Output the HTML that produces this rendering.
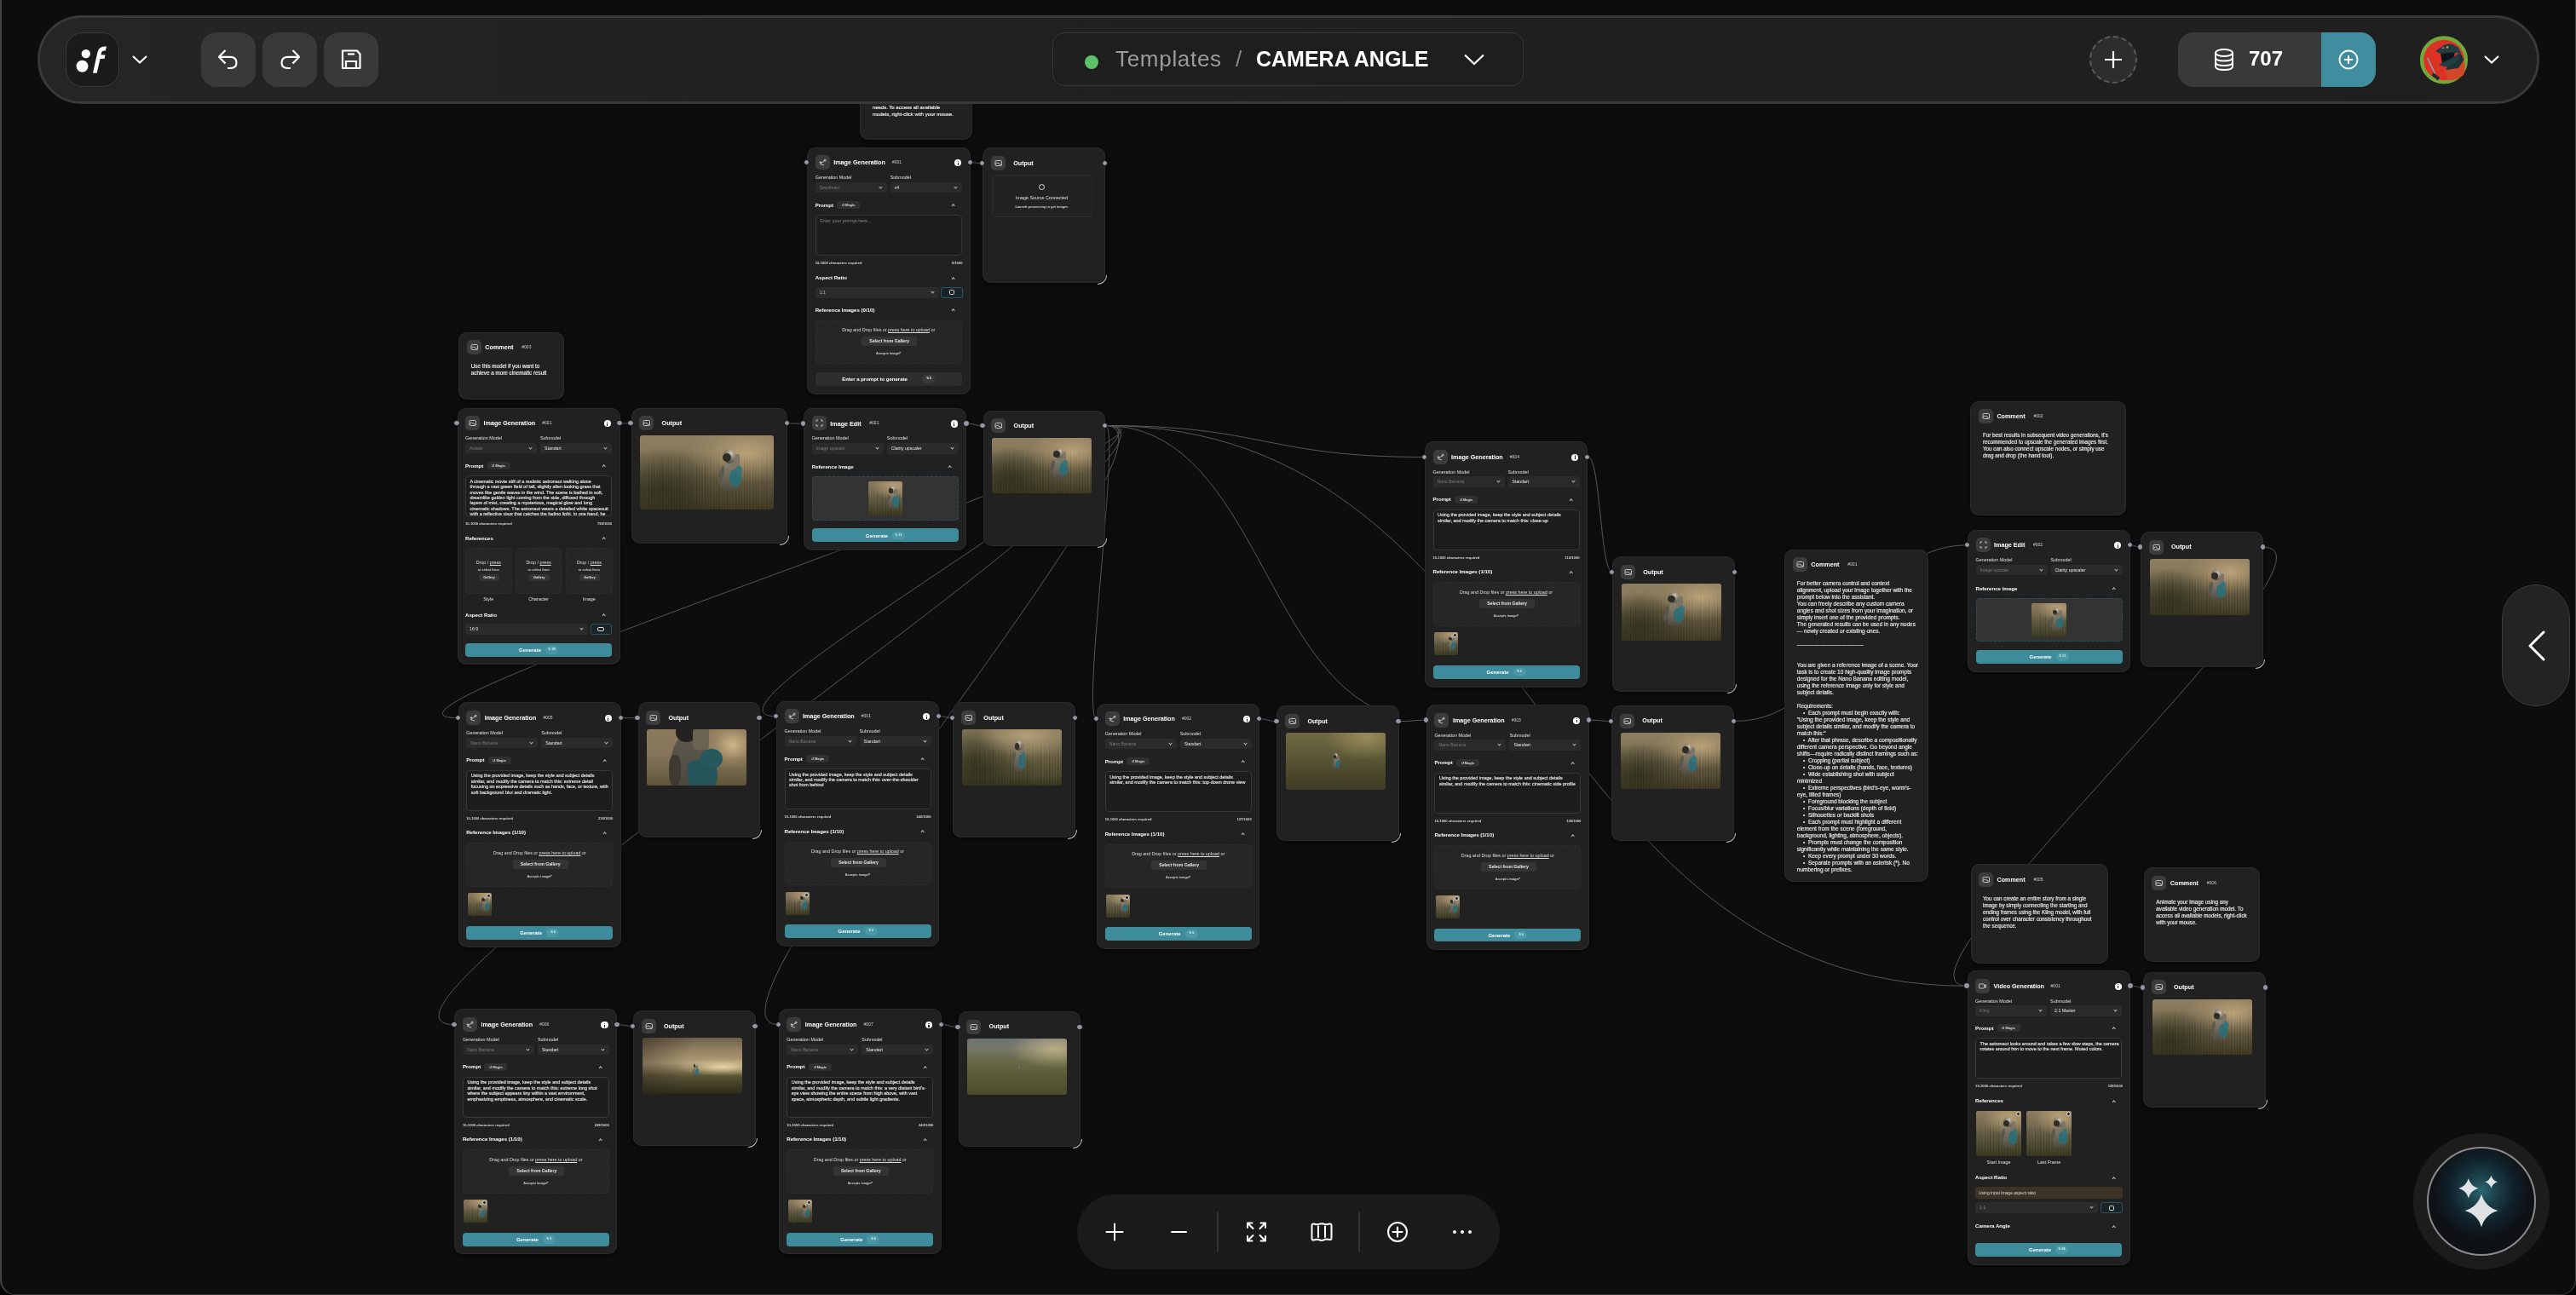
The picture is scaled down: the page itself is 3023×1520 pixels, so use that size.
<!DOCTYPE html>
<html><head><meta charset="utf-8"><style>
*{box-sizing:border-box;margin:0;padding:0}
html,body{width:3023px;height:1520px;overflow:hidden;background:#000}
body{font-family:"Liberation Sans",sans-serif;color:#fff;position:relative;-webkit-font-smoothing:antialiased}
.abs{position:absolute}
#win{position:absolute;left:0;top:0;width:3023px;height:1520px;will-change:transform;background:#0d0d0d;border-bottom-left-radius:18px;border-bottom-right-radius:18px;overflow:hidden}
#topbar{position:absolute;left:44px;top:18px;width:2936px;height:104px;border-radius:52px;border:3px solid #393939;background:linear-gradient(90deg,#252525 0%,#212121 30%,#202020 70%,#1f1f1f 100%)}
.tbtn{position:absolute;top:38px;width:64px;height:64px;border-radius:18px;background:#393939}
.logo{position:absolute;left:77px;top:38px;width:63px;height:64px;border-radius:20px;background:#1b1b1b;border:1px solid #3a3a3a}
.crumb{position:absolute;left:1235px;top:38px;width:553px;height:63px;border-radius:14px;border:1.5px solid #363636;background:#1e1e1e}
.credits{position:absolute;left:2556px;top:38px;width:232px;height:64px;border-radius:18px;background:#393939;overflow:hidden}
.credits .teal{position:absolute;right:0;top:0;width:64px;height:64px;background:#3f8d9e}
.dashc{position:absolute;left:2452px;top:42px;width:56px;height:56px;border-radius:50%;border:2px dashed #5a5a5a;background:#2d2d2d}
.avatar{position:absolute;left:2840px;top:42px;width:56px;height:56px;border-radius:50%;background:#6ea43a;overflow:hidden}
#zoombar{position:absolute;left:1264px;top:1402px;width:496px;height:88px;border-radius:44px;background:#1b1b1b}
#rtab{position:absolute;left:2936px;top:686px;width:80px;height:143px;border-radius:40px;background:#232323;border:1.5px solid #3b3b3b}
#spark{position:absolute;left:2832px;top:1330px;width:160px;height:160px;border-radius:50%;background:#1c1c1c}
#spark .in{position:absolute;left:16px;top:16px;width:128px;height:128px;border-radius:50%;border:2px solid #8a8a8a;background:radial-gradient(circle at 50% 40%,#2c6672 0%,#1c414a 18%,#10202a 40%,#0e1115 60%)}

.nd{position:absolute;background:#212121;border-radius:10px;box-shadow:inset 0 0 0 1px #2a2a2a,0 2px 6px rgba(0,0,0,.5)}
.ic{position:absolute;left:9.5px;top:9.5px;width:17px;height:17px;border-radius:5px;background:#3c3c3c}
.ic svg{position:absolute;left:0;top:0}
.tt{position:absolute;left:31px;top:13.8px;font-size:7.2px;line-height:9px;font-weight:bold;color:#fff;white-space:nowrap}
.id{position:absolute;top:14.5px;font-size:5px;line-height:7px;color:#d0d0d0;white-space:nowrap}
.info{position:absolute;width:8.2px;height:8.2px;border-radius:50%;background:#fff}
.info:after{content:"";position:absolute;left:3.55px;top:3.6px;width:1.1px;height:3px;background:#222}
.info:before{content:"";position:absolute;left:3.55px;top:1.7px;width:1.1px;height:1.1px;background:#222;border-radius:50%}
.hd{position:absolute;width:5.4px;height:5.4px;border-radius:50%;background:#9896a4;border:1.5px solid #0a0a0a;box-sizing:content-box}
.lb{position:absolute;font-size:5.4px;line-height:7px;color:#e0e0e0;white-space:nowrap}
.sel{position:absolute;height:12.5px;border-radius:3px;background:#2b2b2b}
.sel span{position:absolute;left:5px;top:3px;font-size:5.2px;line-height:6.5px;white-space:nowrap}
.sel i{position:absolute;right:6px;top:4px;width:3px;height:3px;border-right:0.8px solid #bbb;border-bottom:0.8px solid #bbb;transform:rotate(45deg)}
.sh{position:absolute;font-size:6.1px;line-height:8px;font-weight:bold;color:#fff;white-space:nowrap}
.chip{position:absolute;height:9px;border-radius:3px;background:#303030;font-size:4px;line-height:9px;color:#ddd;font-weight:bold;text-align:center}
.car{position:absolute;width:3.4px;height:3.4px;border-left:0.9px solid #bbb;border-top:0.9px solid #bbb;transform:rotate(45deg)}
.ta{position:absolute;border:1px solid #363636;border-radius:4px;background:#1d1d1d;padding:2.6px 4.5px;font-size:5.45px;line-height:6.4px;color:#e4e4e4;overflow:hidden;white-space:pre;-webkit-text-stroke:0.15px currentColor}
.sm{position:absolute;font-size:4.13px;line-height:5px;color:#d8d8d8;white-space:nowrap;font-weight:bold}
.dz{position:absolute;border:1px dashed #2d2d2d;border-radius:4px;background:#262626}
.dz .t1{position:absolute;left:0;right:0;text-align:center;font-size:5.36px;line-height:6px;color:#dedede;white-space:nowrap}
.dz .t1 u{text-decoration:underline}
.dz .gb{position:absolute;height:11px;border-radius:3px;background:#343434;font-size:5.14px;line-height:11px;color:#e8e8e8;text-align:center;font-weight:bold}
.dz .t2{position:absolute;left:0;right:0;text-align:center;font-size:3.8px;line-height:5px;color:#cfcfcf;font-weight:bold}
.gen{position:absolute;height:15.8px;border-radius:4px;background:#3e8c9b;text-align:center}
.gen b{position:absolute;top:5.2px;font-size:6px;line-height:7px;color:#fff}
.gen s{position:absolute;top:3.2px;height:9.4px;border-radius:5px;background:#4b98a6;text-decoration:none;font-size:3.8px;line-height:9.4px;color:#d8eef2;text-align:center;font-weight:bold}
.gray{background:#2e2e2e}
.rbtn{position:absolute;height:13px;border-radius:3px;border:1px solid #2a5663;background:#1a2427}
.rbtn i{position:absolute;left:50%;top:50%;width:6px;height:6px;margin:-3px 0 0 -3px;border:0.9px solid #ddd;border-radius:1.5px}
.rbtn.wide i{width:8px;height:4.5px;margin:-2.25px 0 0 -4px;border-radius:2px}
.th{position:absolute;border-radius:2px;overflow:hidden}
.thx{position:absolute;width:5px;height:5px;border-radius:50%;background:#1a1a1a;border:0.6px solid #ddd}
.ot{position:absolute;top:13.3px;font-size:7.2px;line-height:9px;font-weight:bold;color:#fff}
.img{position:absolute;border-radius:3px;overflow:hidden}
.rs{position:absolute;width:11px;height:11px;border-right:1.4px solid #b8b8b8;border-bottom:1.4px solid #b8b8b8;border-bottom-right-radius:11px}
.ct{position:absolute;font-size:6.3px;line-height:8px;color:#e6e6e6;white-space:pre;-webkit-text-stroke:0.18px #e6e6e6}
</style></head>
<body><div id="win">
<svg class="abs" style="left:0;top:0" width="3023" height="1520"><g stroke="#8a8a8a" stroke-width="1" fill="none" opacity="0.6"><path d="M1297.0 499.5 C1484.5 499.5 1484.5 536.5 1672.0 536.5"/><path d="M1297.0 499.5 C1802.8 499.5 1802.8 1157.3 2308.6 1157.3"/><path d="M1297.0 499.5 C1316.6 499.5 1267.6 843.9 1287.2 843.9"/><path d="M1297.0 499.5 C1419.8 499.5 788.2 840.8 911.0 840.8"/><path d="M1297.0 499.5 C1469.2 499.5 365.5 842.7 537.7 842.7"/><path d="M1297.0 499.5 C1469.7 499.5 360.7 1202.7 533.4 1202.7"/><path d="M1297.0 499.5 C1419.3 499.5 791.5 1202.7 913.8 1202.7"/><path d="M1297.0 499.5 C1462.9 499.5 1482.8 767.3 1613.6 831.6"/><path d="M727.6 497.0 C734.1 497.0 734.1 497.0 740.6 497.0"/><path d="M923.8 497.0 C933.5 497.0 933.5 497.2 943.3 497.2"/><path d="M1134.5 497.2 C1144.0 497.2 1144.0 499.8 1153.6 499.8"/><path d="M1139.0 190.8 C1146.1 190.8 1146.1 191.7 1153.2 191.7"/><path d="M728.8 842.7 C738.6 842.7 738.6 842.7 748.5 842.7"/><path d="M1102.0 840.8 C1110.2 840.8 1110.2 842.7 1118.3 842.7"/><path d="M1478.4 843.9 C1488.4 843.9 1488.4 846.7 1498.4 846.7"/><path d="M1863.7 536.5 C1878.0 536.5 1878.0 671.7 1892.2 671.7"/><path d="M1865.6 845.3 C1878.4 845.3 1878.4 846.5 1891.3 846.5"/><path d="M2035.1 846.5 C2172.1 846.5 2172.1 639.8 2309.0 639.8"/><path d="M2500.2 639.8 C2506.1 639.8 2506.1 642.3 2512.0 642.3"/><path d="M2655.9 642.3 C2772.4 642.3 2192.1 1157.3 2308.6 1157.3"/><path d="M1641.6 846.7 C1657.8 846.7 1657.8 845.3 1674.0 845.3"/><path d="M724.6 1202.7 C733.8 1202.7 733.8 1204.6 743.0 1204.6"/><path d="M1105.3 1202.7 C1114.9 1202.7 1114.9 1205.5 1124.6 1205.5"/><path d="M2500.5 1157.3 C2507.8 1157.3 2507.8 1159.1 2515.0 1159.1"/></g></svg><div class="nd" style="left:1009px;top:60px;width:132px;height:103.5px;"><div class="ct" style="left:14.8px;top:62px;font-size:6px">needs. To access all available
models, right-click with your mouse.</div></div><div class="nd" style="left:947.2px;top:172.5px;width:191.8px;height:290px;"><div class="ic"><svg width="17" height="17" viewBox="0 0 17 17"><g stroke="#cfcfcf" stroke-width="0.9" fill="none"><path d="M5.5 10.5 L11 6.5 M5.5 10.5 L10 12"/><circle cx="11.2" cy="6.2" r="1"/></g><path d="M6 6.5 l0.5 1.5 1.5 .5 -1.5 .5 -.5 1.5 -.5-1.5 -1.5-.5 1.5-.5z" fill="#cfcfcf"/></svg></div><div class="tt" style="left:31px">Image Generation</div><div class="id" style="left:99.8px">#001</div><div class="info" style="left:172.9px;top:14.6px"></div><div class="lb" style="left:9.5px;top:32.5px">Generation Model</div><div class="lb" style="left:97.5px;top:32.5px">Submodel</div><div class="sel" style="left:9.5px;top:41.3px;width:84px"><span style="color:#7a7a7a">Seedream</span><i></i></div><div class="sel" style="left:97.5px;top:41.3px;width:84px"><span style="color:#e8e8e8">v4</span><i></i></div><div class="sh" style="left:9.5px;top:64.0px">Prompt</div><div class="car" style="left:170px;top:67.5px"></div><div class="chip" style="left:35px;top:63.5px;width:27px">&#8634; Magic</div><div class="ta" style="left:9.5px;top:79.5px;width:172px;height:48px;color:#6a6a6a">Enter your prompt here...</div><div class="sm" style="left:9.5px;top:133.5px">10-1000 characters required</div><div class="sm" style="right:9.5px;top:133.5px">0/1000</div><div class="sh" style="left:9.5px;top:149.5px">Aspect Ratio</div><div class="car" style="left:170px;top:153.0px"></div><div class="sel" style="left:9.5px;top:164.5px;width:145px"><span style="color:#bbb">1:1</span><i></i></div><div class="rbtn" style="left:156.6px;top:164px;width:25.8px"><i></i></div><div class="sh" style="left:9.5px;top:187.3px">Reference Images (0/10)</div><div class="car" style="left:170px;top:190.8px"></div><div class="dz" style="left:9.5px;top:203px;width:172px;height:51.5px"><div class="t1" style="top:7.8px">Drag and Drop files or <u>press here to upload</u> or</div><div class="gb" style="left:53.5px;top:18.8px;width:65px">Select from Gallery</div><div class="t2" style="top:36.5px">Accepts image/*</div></div><div class="gen gray" style="left:9.5px;top:264.5px;width:172px"><b style="left:31.5px">Enter a prompt to generate</b><s style="left:125.5px;width:15px;background:#3a3a3a">&#8623; 6</s></div></div><div class="hd" style="left:943.0px;top:186.9px"></div><div class="hd" style="left:1134.8px;top:186.9px"></div><div class="nd" style="left:1153.2px;top:173.4px;width:143.8px;height:159px;"><div class="ic"><svg width="17" height="17" viewBox="0 0 17 17"><g stroke="#cfcfcf" stroke-width="0.9" fill="none"><rect x="5" y="5.5" width="7.5" height="6" rx="1.2"/><path d="M5.2 9.5 L7.5 8 L12.3 10.8"/></g></svg></div><div class="ot" style="left:36px">Output</div><div class="img" style="left:10.5px;top:32px;width:117.3px;height:0px"></div></div><div class="hd" style="left:1149.0px;top:187.8px"></div><div class="hd" style="left:1292.8px;top:187.8px"></div><div class="rs" style="left:1288.0px;top:323.4px"></div><div class="abs" style="left:1163.5px;top:204.5px;width:118px;height:50.5px;border:1px solid #2c2c2c;border-radius:4px;background:#222"></div><div class="abs" style="left:1163.5px;top:229px;width:118px;text-align:center;font-size:5.4px;line-height:7px;color:#e0e0e0">Image Source Connected</div><div class="abs" style="left:1163.5px;top:240px;width:118px;text-align:center;font-size:3.9px;line-height:5px;color:#d0d0d0;font-weight:bold">Launch processing to get images</div><div class="abs" style="left:1218.5px;top:216px;width:7px;height:7px;border-radius:50%;border:0.9px solid #ddd"></div><div class="nd" style="left:538.3px;top:389.5px;width:123.3px;height:79.5px;"><div class="ic"><svg width="17" height="17" viewBox="0 0 17 17"><g stroke="#cfcfcf" stroke-width="0.9" fill="none"><rect x="5" y="5.5" width="7.5" height="6" rx="1.2"/><path d="M5.2 9.5 L7.5 8 L12.3 10.8"/></g></svg></div><div class="tt" style="left:31px">Comment</div><div class="id" style="left:74.0px">#003</div><div class="ct" style="left:14.5px;top:36.5px;font-size:6.3px">Use this model if you want to
achieve a more cinematic result</div></div><div class="nd" style="left:536.5px;top:478.7px;width:191.1px;height:301.6px;"><div class="ic"><svg width="17" height="17" viewBox="0 0 17 17"><g stroke="#cfcfcf" stroke-width="0.9" fill="none"><rect x="5" y="5.5" width="7.5" height="6" rx="1.2"/><path d="M5.2 9.5 L7.5 8 L12.3 10.8"/></g></svg></div><div class="tt" style="left:31px">Image Generation</div><div class="id" style="left:99.8px">#001</div><div class="info" style="left:172.2px;top:14.6px"></div><div class="lb" style="left:9.5px;top:32.5px">Generation Model</div><div class="lb" style="left:97.5px;top:32.5px">Submodel</div><div class="sel" style="left:9.5px;top:41.3px;width:84px"><span style="color:#7a7a7a">Artistic</span><i></i></div><div class="sel" style="left:97.5px;top:41.3px;width:84px"><span style="color:#e8e8e8">Standart</span><i></i></div><div class="sh" style="left:9.5px;top:64.0px">Prompt</div><div class="car" style="left:170px;top:67.5px"></div><div class="chip" style="left:35px;top:63.5px;width:27px">&#8634; Magic</div><div class="ta" style="left:9.5px;top:79.5px;width:172px;height:48px;color:#e4e4e4">A cinematic movie still of a realistic astronaut walking alone
through a vast green field of tall, slightly alien-looking grass that
moves like gentle waves in the wind. The scene is bathed in soft,
dreamlike golden light coming from the side, diffused through
layers of mist, creating a mysterious, magical glow and long
cinematic shadows. The astronaut wears a detailed white spacesuit
with a reflective visor that catches the fading light. In one hand, he</div><div class="sm" style="left:9.5px;top:133.5px">10-1000 characters required</div><div class="sm" style="right:9.5px;top:133.5px">799/1000</div><div class="sh" style="left:9.5px;top:149.2px">References</div><div class="car" style="left:170px;top:152.7px"></div><div class="dz" style="left:9.5px;top:164px;width:54.5px;height:54.7px"><div class="t1" style="top:13px">Drop / <u>press</u></div><div class="t2" style="top:23px">or select from</div><div class="gb" style="left:15px;top:30px;width:24px;height:8px;line-height:8px;font-size:4px">Gallery</div></div><div class="lb" style="left:9.5px;width:54.5px;text-align:center;top:221.5px">Style</div><div class="dz" style="left:68.3px;top:164px;width:54.5px;height:54.7px"><div class="t1" style="top:13px">Drop / <u>press</u></div><div class="t2" style="top:23px">or select from</div><div class="gb" style="left:15px;top:30px;width:24px;height:8px;line-height:8px;font-size:4px">Gallery</div></div><div class="lb" style="left:68.3px;width:54.5px;text-align:center;top:221.5px">Character</div><div class="dz" style="left:127.5px;top:164px;width:54.5px;height:54.7px"><div class="t1" style="top:13px">Drop / <u>press</u></div><div class="t2" style="top:23px">or select from</div><div class="gb" style="left:15px;top:30px;width:24px;height:8px;line-height:8px;font-size:4px">Gallery</div></div><div class="lb" style="left:127.5px;width:54.5px;text-align:center;top:221.5px">Image</div><div class="sh" style="left:9.5px;top:239px">Aspect Ratio</div><div class="car" style="left:170px;top:242.5px"></div><div class="sel" style="left:9.5px;top:253.5px;width:143.5px;height:13px"><span style="color:#ddd">16:9</span><i></i></div><div class="rbtn wide" style="left:156px;top:253.5px;width:25.5px"><i></i></div><div class="gen" style="left:9.5px;top:276.5px;width:172px"><b style="left:63.0px">Generate</b><s style="left:94.0px;width:15px;">&#8623; 28</s></div></div><div class="hd" style="left:532.3px;top:493.1px"></div><div class="hd" style="left:723.4px;top:493.1px"></div><div class="nd" style="left:740.6px;top:478.7px;width:183.2px;height:159px;"><div class="ic"><svg width="17" height="17" viewBox="0 0 17 17"><g stroke="#cfcfcf" stroke-width="0.9" fill="none"><rect x="5" y="5.5" width="7.5" height="6" rx="1.2"/><path d="M5.2 9.5 L7.5 8 L12.3 10.8"/></g></svg></div><div class="ot" style="left:36px">Output</div><div class="img" style="left:10.5px;top:32px;width:156.7px;height:87.7px"><div style="position:absolute;left:0;top:0;width:100%;height:100%;overflow:hidden;background:radial-gradient(ellipse 45% 40% at 80% 25%,rgba(205,178,132,.75) 0%,rgba(190,165,120,.25) 60%,rgba(0,0,0,0) 100%),radial-gradient(ellipse 35% 55% at 18% 72%,rgba(48,50,30,.6) 0%,rgba(48,50,30,0) 100%),linear-gradient(180deg,#8e7e61 0%,#88795b 22%,#776a50 42%,#615840 60%,#514933 78%,#3d3722 100%)"><i style="position:absolute;left:0;top:15%;width:100%;height:85%;background:repeating-linear-gradient(90deg,rgba(25,25,10,.12) 0px,rgba(0,0,0,0) 1.3px,rgba(200,185,130,.07) 2.1px,rgba(0,0,0,0) 3.3px),repeating-linear-gradient(90deg,rgba(20,22,10,.09) 0px,rgba(0,0,0,0) 2px,rgba(0,0,0,0) 5.1px);-webkit-mask-image:linear-gradient(180deg,transparent 0%,#000 40%,#000 100%)"></i><i style="position:absolute;left:0;top:0;width:100%;height:100%;background:radial-gradient(ellipse 55% 60% at 20% 75%,rgba(35,38,20,.4) 0%,rgba(35,38,20,0) 100%)"></i><b style="position:absolute;left:58%;top:19%;width:19%;height:58%;opacity:0.9"><i style="position:absolute;left:18%;top:30%;width:62%;height:66%;border-radius:40% 40% 20% 20%;background:linear-gradient(180deg,#858072 0%,#6f6a5d 50%,#4f4b42 100%)"></i><i style="position:absolute;left:6%;top:38%;width:18%;height:44%;border-radius:40%;background:#5a564c;transform:rotate(12deg)"></i><i style="position:absolute;left:58%;top:12%;width:30%;height:38%;border-radius:25%;background:#7a7466"></i><i style="position:absolute;left:22%;top:0%;width:50%;height:32%;border-radius:50%;background:radial-gradient(circle at 62% 30%,#d6cfbe 0%,#8f897b 35%,#4a473f 80%)"></i><i style="position:absolute;left:20%;top:9%;width:34%;height:20%;border-radius:50%;background:#24231f"></i><i style="position:absolute;left:48%;top:46%;width:46%;height:40%;border-radius:45% 50% 40% 45%;background:#2b6f79"></i><i style="position:absolute;left:70%;top:38%;width:26%;height:20%;border-radius:50%;background:#2e7480"></i></b></div></div></div><div class="hd" style="left:736.4px;top:493.1px"></div><div class="hd" style="left:919.6px;top:493.1px"></div><div class="rs" style="left:914.8px;top:628.7px"></div><div class="nd" style="left:943.3px;top:478.9px;width:191.2px;height:167px;"><div class="ic"><svg width="17" height="17" viewBox="0 0 17 17"><g stroke="#cfcfcf" stroke-width="0.9" fill="none"><path d="M5 7 V5 H7 M10 5 H12 V7 M12 10 V12 H10 M7 12 H5 V10"/></g></svg></div><div class="tt" style="left:31px">Image Edit</div><div class="id" style="left:77.0px">#001</div><div class="info" style="left:172.3px;top:14.6px"></div><div class="lb" style="left:9.5px;top:32.5px">Generation Model</div><div class="lb" style="left:97.5px;top:32.5px">Submodel</div><div class="sel" style="left:9.5px;top:41.3px;width:84px"><span style="color:#7a7a7a">Image upscale</span><i></i></div><div class="sel" style="left:97.5px;top:41.3px;width:84px"><span style="color:#e8e8e8">Clarity upscaler</span><i></i></div><div class="sh" style="left:9.5px;top:65px">Reference Image</div><div class="car" style="left:170px;top:68.5px"></div><div class="dz" style="left:9.7px;top:80.3px;width:172px;height:51.5px;background:#333;border-color:#2c4f57"></div><div class="th" style="left:75.3px;top:86px;width:40.6px;height:40px"><div style="position:absolute;left:0;top:0;width:100%;height:100%;overflow:hidden;background:radial-gradient(ellipse 60% 40% at 75% 15%,rgba(205,178,132,.7) 0%,rgba(0,0,0,0) 100%),linear-gradient(180deg,#8a7a5e 0%,#7a6d53 30%,#5e5840 55%,#4a4730 80%,#38361f 100%)"><i style="position:absolute;left:0;top:15%;width:100%;height:85%;background:repeating-linear-gradient(90deg,rgba(25,25,10,.12) 0px,rgba(0,0,0,0) 1.3px,rgba(200,185,130,.07) 2.1px,rgba(0,0,0,0) 3.3px),repeating-linear-gradient(90deg,rgba(20,22,10,.09) 0px,rgba(0,0,0,0) 2px,rgba(0,0,0,0) 5.1px);-webkit-mask-image:linear-gradient(180deg,transparent 0%,#000 40%,#000 100%)"></i><b style="position:absolute;left:52%;top:14%;width:40%;height:70%;opacity:0.9"><i style="position:absolute;left:18%;top:30%;width:62%;height:66%;border-radius:40% 40% 20% 20%;background:linear-gradient(180deg,#858072 0%,#6f6a5d 50%,#4f4b42 100%)"></i><i style="position:absolute;left:6%;top:38%;width:18%;height:44%;border-radius:40%;background:#5a564c;transform:rotate(12deg)"></i><i style="position:absolute;left:58%;top:12%;width:30%;height:38%;border-radius:25%;background:#7a7466"></i><i style="position:absolute;left:22%;top:0%;width:50%;height:32%;border-radius:50%;background:radial-gradient(circle at 62% 30%,#d6cfbe 0%,#8f897b 35%,#4a473f 80%)"></i><i style="position:absolute;left:20%;top:9%;width:34%;height:20%;border-radius:50%;background:#24231f"></i><i style="position:absolute;left:48%;top:46%;width:46%;height:40%;border-radius:45% 50% 40% 45%;background:#2b6f79"></i><i style="position:absolute;left:70%;top:38%;width:26%;height:20%;border-radius:50%;background:#2e7480"></i></b></div></div><div class="gen" style="left:9.5px;top:141.5px;width:172px"><b style="left:63.0px">Generate</b><s style="left:94.0px;width:15px;">&#8623; 13</s></div></div><div class="hd" style="left:939.1px;top:493.3px"></div><div class="hd" style="left:1130.3px;top:493.3px"></div><div class="nd" style="left:1153.6px;top:481.5px;width:143.4px;height:159px;"><div class="ic"><svg width="17" height="17" viewBox="0 0 17 17"><g stroke="#cfcfcf" stroke-width="0.9" fill="none"><rect x="5" y="5.5" width="7.5" height="6" rx="1.2"/><path d="M5.2 9.5 L7.5 8 L12.3 10.8"/></g></svg></div><div class="ot" style="left:36px">Output</div><div class="img" style="left:10.5px;top:32px;width:116.9px;height:65px"><div style="position:absolute;left:0;top:0;width:100%;height:100%;overflow:hidden;background:radial-gradient(ellipse 45% 40% at 80% 25%,rgba(205,178,132,.75) 0%,rgba(190,165,120,.25) 60%,rgba(0,0,0,0) 100%),radial-gradient(ellipse 35% 55% at 18% 72%,rgba(48,50,30,.6) 0%,rgba(48,50,30,0) 100%),linear-gradient(180deg,#8e7e61 0%,#88795b 22%,#776a50 42%,#615840 60%,#514933 78%,#3d3722 100%)"><i style="position:absolute;left:0;top:15%;width:100%;height:85%;background:repeating-linear-gradient(90deg,rgba(25,25,10,.12) 0px,rgba(0,0,0,0) 1.3px,rgba(200,185,130,.07) 2.1px,rgba(0,0,0,0) 3.3px),repeating-linear-gradient(90deg,rgba(20,22,10,.09) 0px,rgba(0,0,0,0) 2px,rgba(0,0,0,0) 5.1px);-webkit-mask-image:linear-gradient(180deg,transparent 0%,#000 40%,#000 100%)"></i><i style="position:absolute;left:0;top:0;width:100%;height:100%;background:radial-gradient(ellipse 55% 60% at 20% 75%,rgba(35,38,20,.4) 0%,rgba(35,38,20,0) 100%)"></i><b style="position:absolute;left:58%;top:19%;width:19%;height:58%;opacity:0.9"><i style="position:absolute;left:18%;top:30%;width:62%;height:66%;border-radius:40% 40% 20% 20%;background:linear-gradient(180deg,#858072 0%,#6f6a5d 50%,#4f4b42 100%)"></i><i style="position:absolute;left:6%;top:38%;width:18%;height:44%;border-radius:40%;background:#5a564c;transform:rotate(12deg)"></i><i style="position:absolute;left:58%;top:12%;width:30%;height:38%;border-radius:25%;background:#7a7466"></i><i style="position:absolute;left:22%;top:0%;width:50%;height:32%;border-radius:50%;background:radial-gradient(circle at 62% 30%,#d6cfbe 0%,#8f897b 35%,#4a473f 80%)"></i><i style="position:absolute;left:20%;top:9%;width:34%;height:20%;border-radius:50%;background:#24231f"></i><i style="position:absolute;left:48%;top:46%;width:46%;height:40%;border-radius:45% 50% 40% 45%;background:#2b6f79"></i><i style="position:absolute;left:70%;top:38%;width:26%;height:20%;border-radius:50%;background:#2e7480"></i></b></div></div></div><div class="hd" style="left:1149.4px;top:495.9px"></div><div class="hd" style="left:1292.8px;top:495.9px"></div><div class="rs" style="left:1288.0px;top:631.5px"></div><div class="nd" style="left:537.7px;top:824.4px;width:191px;height:288px;"><div class="ic"><svg width="17" height="17" viewBox="0 0 17 17"><g stroke="#cfcfcf" stroke-width="0.9" fill="none"><path d="M5.5 10.5 L11 6.5 M5.5 10.5 L10 12"/><circle cx="11.2" cy="6.2" r="1"/></g><path d="M6 6.5 l0.5 1.5 1.5 .5 -1.5 .5 -.5 1.5 -.5-1.5 -1.5-.5 1.5-.5z" fill="#cfcfcf"/></svg></div><div class="tt" style="left:31px">Image Generation</div><div class="id" style="left:99.8px">#005</div><div class="info" style="left:172.1px;top:14.6px"></div><div class="lb" style="left:9.5px;top:32.5px">Generation Model</div><div class="lb" style="left:97.5px;top:32.5px">Submodel</div><div class="sel" style="left:9.5px;top:41.3px;width:84px"><span style="color:#7a7a7a">Nano Banana</span><i></i></div><div class="sel" style="left:97.5px;top:41.3px;width:84px"><span style="color:#e8e8e8">Standart</span><i></i></div><div class="sh" style="left:9.5px;top:64.0px">Prompt</div><div class="car" style="left:170px;top:67.5px"></div><div class="chip" style="left:35px;top:63.5px;width:27px">&#8634; Magic</div><div class="ta" style="left:9.5px;top:79.5px;width:172px;height:48px;color:#e4e4e4">Using the provided image, keep the style and subject details
similar, and modify the camera to match this: extreme detail
focusing on expressive details such as hands, face, or texture, with
soft background blur and dramatic light.</div><div class="sm" style="left:9.5px;top:133.5px">10-1000 characters required</div><div class="sm" style="right:9.5px;top:133.5px">218/1000</div><div class="sh" style="left:9.5px;top:149px">Reference Images (1/10)</div><div class="car" style="left:170px;top:152.5px"></div><div class="dz" style="left:9.5px;top:165px;width:172px;height:51.5px"><div class="t1" style="top:7.8px">Drag and Drop files or <u>press here to upload</u> or</div><div class="gb" style="left:53.5px;top:18.8px;width:65px">Select from Gallery</div><div class="t2" style="top:36.5px">Accepts image/*</div></div><div class="th" style="left:11px;top:224px;width:28px;height:27px"><div style="position:absolute;left:0;top:0;width:100%;height:100%;overflow:hidden;background:radial-gradient(ellipse 60% 40% at 75% 15%,rgba(205,178,132,.7) 0%,rgba(0,0,0,0) 100%),linear-gradient(180deg,#8a7a5e 0%,#7a6d53 30%,#5e5840 55%,#4a4730 80%,#38361f 100%)"><i style="position:absolute;left:0;top:15%;width:100%;height:85%;background:repeating-linear-gradient(90deg,rgba(25,25,10,.12) 0px,rgba(0,0,0,0) 1.3px,rgba(200,185,130,.07) 2.1px,rgba(0,0,0,0) 3.3px),repeating-linear-gradient(90deg,rgba(20,22,10,.09) 0px,rgba(0,0,0,0) 2px,rgba(0,0,0,0) 5.1px);-webkit-mask-image:linear-gradient(180deg,transparent 0%,#000 40%,#000 100%)"></i><b style="position:absolute;left:52%;top:14%;width:40%;height:70%;opacity:0.9"><i style="position:absolute;left:18%;top:30%;width:62%;height:66%;border-radius:40% 40% 20% 20%;background:linear-gradient(180deg,#858072 0%,#6f6a5d 50%,#4f4b42 100%)"></i><i style="position:absolute;left:6%;top:38%;width:18%;height:44%;border-radius:40%;background:#5a564c;transform:rotate(12deg)"></i><i style="position:absolute;left:58%;top:12%;width:30%;height:38%;border-radius:25%;background:#7a7466"></i><i style="position:absolute;left:22%;top:0%;width:50%;height:32%;border-radius:50%;background:radial-gradient(circle at 62% 30%,#d6cfbe 0%,#8f897b 35%,#4a473f 80%)"></i><i style="position:absolute;left:20%;top:9%;width:34%;height:20%;border-radius:50%;background:#24231f"></i><i style="position:absolute;left:48%;top:46%;width:46%;height:40%;border-radius:45% 50% 40% 45%;background:#2b6f79"></i><i style="position:absolute;left:70%;top:38%;width:26%;height:20%;border-radius:50%;background:#2e7480"></i></b></div></div><div class="thx" style="left:33px;top:225px"></div><div class="gen" style="left:9.5px;top:262.6px;width:172px"><b style="left:63.0px">Generate</b><s style="left:94.0px;width:15px;">&#8623; 6</s></div></div><div class="hd" style="left:533.5px;top:838.8px"></div><div class="hd" style="left:724.5px;top:838.8px"></div><div class="nd" style="left:748.5px;top:824.4px;width:143.1px;height:159px;"><div class="ic"><svg width="17" height="17" viewBox="0 0 17 17"><g stroke="#cfcfcf" stroke-width="0.9" fill="none"><rect x="5" y="5.5" width="7.5" height="6" rx="1.2"/><path d="M5.2 9.5 L7.5 8 L12.3 10.8"/></g></svg></div><div class="ot" style="left:36px">Output</div><div class="img" style="left:10.5px;top:32px;width:116.6px;height:66px"><div style="position:absolute;left:0;top:0;width:100%;height:100%;overflow:hidden;background:radial-gradient(ellipse 30% 45% at 86% 28%,rgba(214,190,142,.9) 0%,rgba(190,160,115,.3) 60%,rgba(0,0,0,0) 100%),linear-gradient(180deg,#8c7a5d 0%,#86755a 40%,#75684c 70%,#5f5539 100%)"><i style="position:absolute;left:25%;top:8%;width:38%;height:100%;border-radius:45% 45% 0 0;background:linear-gradient(180deg,#5f5a50,#4a463d);"></i><i style="position:absolute;left:29%;top:-12%;width:22%;height:34%;border-radius:50%;background:#24221e;"></i><i style="position:absolute;left:46%;top:-4%;width:17%;height:40%;border-radius:20%;background:#6a6352;"></i><i style="position:absolute;left:22%;top:45%;width:12%;height:55%;border-radius:40%;background:#3e3a32;"></i><i style="position:absolute;left:41%;top:52%;width:30%;height:58%;border-radius:45%;background:#24545a;"></i><i style="position:absolute;left:54%;top:35%;width:22%;height:34%;border-radius:50%;background:#26585e;"></i><i style="position:absolute;left:41%;top:55%;width:12%;height:18%;border-radius:50%;background:#24545a;"></i></div></div></div><div class="hd" style="left:744.3px;top:838.8px"></div><div class="hd" style="left:887.4px;top:838.8px"></div><div class="rs" style="left:882.6px;top:974.4px"></div><div class="nd" style="left:911px;top:822.5px;width:191px;height:288px;"><div class="ic"><svg width="17" height="17" viewBox="0 0 17 17"><g stroke="#cfcfcf" stroke-width="0.9" fill="none"><path d="M5.5 10.5 L11 6.5 M5.5 10.5 L10 12"/><circle cx="11.2" cy="6.2" r="1"/></g><path d="M6 6.5 l0.5 1.5 1.5 .5 -1.5 .5 -.5 1.5 -.5-1.5 -1.5-.5 1.5-.5z" fill="#cfcfcf"/></svg></div><div class="tt" style="left:31px">Image Generation</div><div class="id" style="left:99.8px">#001</div><div class="info" style="left:172.1px;top:14.6px"></div><div class="lb" style="left:9.5px;top:32.5px">Generation Model</div><div class="lb" style="left:97.5px;top:32.5px">Submodel</div><div class="sel" style="left:9.5px;top:41.3px;width:84px"><span style="color:#7a7a7a">Nano Banana</span><i></i></div><div class="sel" style="left:97.5px;top:41.3px;width:84px"><span style="color:#e8e8e8">Standart</span><i></i></div><div class="sh" style="left:9.5px;top:64.0px">Prompt</div><div class="car" style="left:170px;top:67.5px"></div><div class="chip" style="left:35px;top:63.5px;width:27px">&#8634; Magic</div><div class="ta" style="left:9.5px;top:79.5px;width:172px;height:48px;color:#e4e4e4">Using the provided image, keep the style and subject details
similar, and modify the camera to match this: over-the-shoulder
shot from behind</div><div class="sm" style="left:9.5px;top:133.5px">10-1000 characters required</div><div class="sm" style="right:9.5px;top:133.5px">142/1000</div><div class="sh" style="left:9.5px;top:149px">Reference Images (1/10)</div><div class="car" style="left:170px;top:152.5px"></div><div class="dz" style="left:9.5px;top:165px;width:172px;height:51.5px"><div class="t1" style="top:7.8px">Drag and Drop files or <u>press here to upload</u> or</div><div class="gb" style="left:53.5px;top:18.8px;width:65px">Select from Gallery</div><div class="t2" style="top:36.5px">Accepts image/*</div></div><div class="th" style="left:11px;top:224px;width:28px;height:27px"><div style="position:absolute;left:0;top:0;width:100%;height:100%;overflow:hidden;background:radial-gradient(ellipse 60% 40% at 75% 15%,rgba(205,178,132,.7) 0%,rgba(0,0,0,0) 100%),linear-gradient(180deg,#8a7a5e 0%,#7a6d53 30%,#5e5840 55%,#4a4730 80%,#38361f 100%)"><i style="position:absolute;left:0;top:15%;width:100%;height:85%;background:repeating-linear-gradient(90deg,rgba(25,25,10,.12) 0px,rgba(0,0,0,0) 1.3px,rgba(200,185,130,.07) 2.1px,rgba(0,0,0,0) 3.3px),repeating-linear-gradient(90deg,rgba(20,22,10,.09) 0px,rgba(0,0,0,0) 2px,rgba(0,0,0,0) 5.1px);-webkit-mask-image:linear-gradient(180deg,transparent 0%,#000 40%,#000 100%)"></i><b style="position:absolute;left:52%;top:14%;width:40%;height:70%;opacity:0.9"><i style="position:absolute;left:18%;top:30%;width:62%;height:66%;border-radius:40% 40% 20% 20%;background:linear-gradient(180deg,#858072 0%,#6f6a5d 50%,#4f4b42 100%)"></i><i style="position:absolute;left:6%;top:38%;width:18%;height:44%;border-radius:40%;background:#5a564c;transform:rotate(12deg)"></i><i style="position:absolute;left:58%;top:12%;width:30%;height:38%;border-radius:25%;background:#7a7466"></i><i style="position:absolute;left:22%;top:0%;width:50%;height:32%;border-radius:50%;background:radial-gradient(circle at 62% 30%,#d6cfbe 0%,#8f897b 35%,#4a473f 80%)"></i><i style="position:absolute;left:20%;top:9%;width:34%;height:20%;border-radius:50%;background:#24231f"></i><i style="position:absolute;left:48%;top:46%;width:46%;height:40%;border-radius:45% 50% 40% 45%;background:#2b6f79"></i><i style="position:absolute;left:70%;top:38%;width:26%;height:20%;border-radius:50%;background:#2e7480"></i></b></div></div><div class="thx" style="left:33px;top:225px"></div><div class="gen" style="left:9.5px;top:262.6px;width:172px"><b style="left:63.0px">Generate</b><s style="left:94.0px;width:15px;">&#8623; 6</s></div></div><div class="hd" style="left:906.8px;top:836.9px"></div><div class="hd" style="left:1097.8px;top:836.9px"></div><div class="nd" style="left:1118.3px;top:824.4px;width:143.7px;height:159px;"><div class="ic"><svg width="17" height="17" viewBox="0 0 17 17"><g stroke="#cfcfcf" stroke-width="0.9" fill="none"><rect x="5" y="5.5" width="7.5" height="6" rx="1.2"/><path d="M5.2 9.5 L7.5 8 L12.3 10.8"/></g></svg></div><div class="ot" style="left:36px">Output</div><div class="img" style="left:10.5px;top:32px;width:117.2px;height:66px"><div style="position:absolute;left:0;top:0;width:100%;height:100%;overflow:hidden;background:radial-gradient(ellipse 50% 40% at 65% 12%,rgba(200,178,135,.7) 0%,rgba(0,0,0,0) 100%),radial-gradient(ellipse 35% 70% at 12% 60%,rgba(50,52,30,.7) 0%,rgba(50,52,30,0) 100%),linear-gradient(180deg,#857658 0%,#756a4f 35%,#5e583b 60%,#48452d 85%,#36341f 100%)"><i style="position:absolute;left:0;top:15%;width:100%;height:85%;background:repeating-linear-gradient(90deg,rgba(25,25,10,.12) 0px,rgba(0,0,0,0) 1.3px,rgba(200,185,130,.07) 2.1px,rgba(0,0,0,0) 3.3px),repeating-linear-gradient(90deg,rgba(20,22,10,.09) 0px,rgba(0,0,0,0) 2px,rgba(0,0,0,0) 5.1px);-webkit-mask-image:linear-gradient(180deg,transparent 0%,#000 40%,#000 100%)"></i><i style="position:absolute;left:0;top:0;width:100%;height:100%;background:radial-gradient(ellipse 55% 60% at 20% 75%,rgba(35,38,20,.4) 0%,rgba(35,38,20,0) 100%)"></i><b style="position:absolute;left:50%;top:18%;width:14%;height:60%;opacity:0.85"><i style="position:absolute;left:18%;top:30%;width:62%;height:66%;border-radius:40% 40% 20% 20%;background:linear-gradient(180deg,#858072 0%,#6f6a5d 50%,#4f4b42 100%)"></i><i style="position:absolute;left:6%;top:38%;width:18%;height:44%;border-radius:40%;background:#5a564c;transform:rotate(12deg)"></i><i style="position:absolute;left:58%;top:12%;width:30%;height:38%;border-radius:25%;background:#7a7466"></i><i style="position:absolute;left:22%;top:0%;width:50%;height:32%;border-radius:50%;background:radial-gradient(circle at 62% 30%,#d6cfbe 0%,#8f897b 35%,#4a473f 80%)"></i><i style="position:absolute;left:20%;top:9%;width:34%;height:20%;border-radius:50%;background:#24231f"></i><i style="position:absolute;left:48%;top:46%;width:46%;height:40%;border-radius:45% 50% 40% 45%;background:#2b6f79"></i><i style="position:absolute;left:70%;top:38%;width:26%;height:20%;border-radius:50%;background:#2e7480"></i></b></div></div></div><div class="hd" style="left:1114.1px;top:838.8px"></div><div class="hd" style="left:1257.8px;top:838.8px"></div><div class="rs" style="left:1253.0px;top:974.4px"></div><div class="nd" style="left:1287.2px;top:825.6px;width:191px;height:288px;"><div class="ic"><svg width="17" height="17" viewBox="0 0 17 17"><g stroke="#cfcfcf" stroke-width="0.9" fill="none"><path d="M5.5 10.5 L11 6.5 M5.5 10.5 L10 12"/><circle cx="11.2" cy="6.2" r="1"/></g><path d="M6 6.5 l0.5 1.5 1.5 .5 -1.5 .5 -.5 1.5 -.5-1.5 -1.5-.5 1.5-.5z" fill="#cfcfcf"/></svg></div><div class="tt" style="left:31px">Image Generation</div><div class="id" style="left:99.8px">#002</div><div class="info" style="left:172.1px;top:14.6px"></div><div class="lb" style="left:9.5px;top:32.5px">Generation Model</div><div class="lb" style="left:97.5px;top:32.5px">Submodel</div><div class="sel" style="left:9.5px;top:41.3px;width:84px"><span style="color:#7a7a7a">Nano Banana</span><i></i></div><div class="sel" style="left:97.5px;top:41.3px;width:84px"><span style="color:#e8e8e8">Standart</span><i></i></div><div class="sh" style="left:9.5px;top:64.0px">Prompt</div><div class="car" style="left:170px;top:67.5px"></div><div class="chip" style="left:35px;top:63.5px;width:27px">&#8634; Magic</div><div class="ta" style="left:9.5px;top:79.5px;width:172px;height:48px;color:#e4e4e4">Using the provided image, keep the style and subject details
similar, and modify the camera to match this: top-down drone view</div><div class="sm" style="left:9.5px;top:133.5px">10-1000 characters required</div><div class="sm" style="right:9.5px;top:133.5px">127/1000</div><div class="sh" style="left:9.5px;top:149px">Reference Images (1/10)</div><div class="car" style="left:170px;top:152.5px"></div><div class="dz" style="left:9.5px;top:165px;width:172px;height:51.5px"><div class="t1" style="top:7.8px">Drag and Drop files or <u>press here to upload</u> or</div><div class="gb" style="left:53.5px;top:18.8px;width:65px">Select from Gallery</div><div class="t2" style="top:36.5px">Accepts image/*</div></div><div class="th" style="left:11px;top:224px;width:28px;height:27px"><div style="position:absolute;left:0;top:0;width:100%;height:100%;overflow:hidden;background:radial-gradient(ellipse 60% 40% at 75% 15%,rgba(205,178,132,.7) 0%,rgba(0,0,0,0) 100%),linear-gradient(180deg,#8a7a5e 0%,#7a6d53 30%,#5e5840 55%,#4a4730 80%,#38361f 100%)"><i style="position:absolute;left:0;top:15%;width:100%;height:85%;background:repeating-linear-gradient(90deg,rgba(25,25,10,.12) 0px,rgba(0,0,0,0) 1.3px,rgba(200,185,130,.07) 2.1px,rgba(0,0,0,0) 3.3px),repeating-linear-gradient(90deg,rgba(20,22,10,.09) 0px,rgba(0,0,0,0) 2px,rgba(0,0,0,0) 5.1px);-webkit-mask-image:linear-gradient(180deg,transparent 0%,#000 40%,#000 100%)"></i><b style="position:absolute;left:52%;top:14%;width:40%;height:70%;opacity:0.9"><i style="position:absolute;left:18%;top:30%;width:62%;height:66%;border-radius:40% 40% 20% 20%;background:linear-gradient(180deg,#858072 0%,#6f6a5d 50%,#4f4b42 100%)"></i><i style="position:absolute;left:6%;top:38%;width:18%;height:44%;border-radius:40%;background:#5a564c;transform:rotate(12deg)"></i><i style="position:absolute;left:58%;top:12%;width:30%;height:38%;border-radius:25%;background:#7a7466"></i><i style="position:absolute;left:22%;top:0%;width:50%;height:32%;border-radius:50%;background:radial-gradient(circle at 62% 30%,#d6cfbe 0%,#8f897b 35%,#4a473f 80%)"></i><i style="position:absolute;left:20%;top:9%;width:34%;height:20%;border-radius:50%;background:#24231f"></i><i style="position:absolute;left:48%;top:46%;width:46%;height:40%;border-radius:45% 50% 40% 45%;background:#2b6f79"></i><i style="position:absolute;left:70%;top:38%;width:26%;height:20%;border-radius:50%;background:#2e7480"></i></b></div></div><div class="thx" style="left:33px;top:225px"></div><div class="gen" style="left:9.5px;top:262.6px;width:172px"><b style="left:63.0px">Generate</b><s style="left:94.0px;width:15px;">&#8623; 6</s></div></div><div class="hd" style="left:1283.0px;top:840.0px"></div><div class="hd" style="left:1474.0px;top:840.0px"></div><div class="nd" style="left:1498.4px;top:828.4px;width:143.2px;height:159px;"><div class="ic"><svg width="17" height="17" viewBox="0 0 17 17"><g stroke="#cfcfcf" stroke-width="0.9" fill="none"><rect x="5" y="5.5" width="7.5" height="6" rx="1.2"/><path d="M5.2 9.5 L7.5 8 L12.3 10.8"/></g></svg></div><div class="ot" style="left:36px">Output</div><div class="img" style="left:10.5px;top:32px;width:116.7px;height:66.4px"><div style="position:absolute;left:0;top:0;width:100%;height:100%;overflow:hidden;background:radial-gradient(ellipse 40% 40% at 80% 8%,rgba(190,170,110,.55) 0%,rgba(0,0,0,0) 100%),linear-gradient(180deg,#6f6944 0%,#5f5b39 35%,#4e4b2e 65%,#3d3b23 100%)"><b style="position:absolute;left:46%;top:36%;width:9%;height:30%;opacity:0.9"><i style="position:absolute;left:18%;top:30%;width:62%;height:66%;border-radius:40% 40% 20% 20%;background:linear-gradient(180deg,#858072 0%,#6f6a5d 50%,#4f4b42 100%)"></i><i style="position:absolute;left:6%;top:38%;width:18%;height:44%;border-radius:40%;background:#5a564c;transform:rotate(12deg)"></i><i style="position:absolute;left:58%;top:12%;width:30%;height:38%;border-radius:25%;background:#7a7466"></i><i style="position:absolute;left:22%;top:0%;width:50%;height:32%;border-radius:50%;background:radial-gradient(circle at 62% 30%,#d6cfbe 0%,#8f897b 35%,#4a473f 80%)"></i><i style="position:absolute;left:20%;top:9%;width:34%;height:20%;border-radius:50%;background:#24231f"></i><i style="position:absolute;left:48%;top:46%;width:46%;height:40%;border-radius:45% 50% 40% 45%;background:#2b6f79"></i><i style="position:absolute;left:70%;top:38%;width:26%;height:20%;border-radius:50%;background:#2e7480"></i></b></div></div></div><div class="hd" style="left:1494.2px;top:842.8px"></div><div class="hd" style="left:1637.4px;top:842.8px"></div><div class="rs" style="left:1632.6px;top:978.4px"></div><div class="nd" style="left:1672px;top:518.2px;width:191px;height:289px;"><div class="ic"><svg width="17" height="17" viewBox="0 0 17 17"><g stroke="#cfcfcf" stroke-width="0.9" fill="none"><path d="M5.5 10.5 L11 6.5 M5.5 10.5 L10 12"/><circle cx="11.2" cy="6.2" r="1"/></g><path d="M6 6.5 l0.5 1.5 1.5 .5 -1.5 .5 -.5 1.5 -.5-1.5 -1.5-.5 1.5-.5z" fill="#cfcfcf"/></svg></div><div class="tt" style="left:31px">Image Generation</div><div class="id" style="left:99.8px">#004</div><div class="info" style="left:172.1px;top:14.6px"></div><div class="lb" style="left:9.5px;top:32.5px">Generation Model</div><div class="lb" style="left:97.5px;top:32.5px">Submodel</div><div class="sel" style="left:9.5px;top:41.3px;width:84px"><span style="color:#7a7a7a">Nano Banana</span><i></i></div><div class="sel" style="left:97.5px;top:41.3px;width:84px"><span style="color:#e8e8e8">Standart</span><i></i></div><div class="sh" style="left:9.5px;top:64.0px">Prompt</div><div class="car" style="left:170px;top:67.5px"></div><div class="chip" style="left:35px;top:63.5px;width:27px">&#8634; Magic</div><div class="ta" style="left:9.5px;top:79.5px;width:172px;height:48px;color:#e4e4e4">Using the provided image, keep the style and subject details
similar, and modify the camera to match this: close-up</div><div class="sm" style="left:9.5px;top:133.5px">10-1000 characters required</div><div class="sm" style="right:9.5px;top:133.5px">116/1000</div><div class="sh" style="left:9.5px;top:149px">Reference Images (1/10)</div><div class="car" style="left:170px;top:152.5px"></div><div class="dz" style="left:9.5px;top:165px;width:172px;height:51.5px"><div class="t1" style="top:7.8px">Drag and Drop files or <u>press here to upload</u> or</div><div class="gb" style="left:53.5px;top:18.8px;width:65px">Select from Gallery</div><div class="t2" style="top:36.5px">Accepts image/*</div></div><div class="th" style="left:11px;top:224px;width:28px;height:27px"><div style="position:absolute;left:0;top:0;width:100%;height:100%;overflow:hidden;background:radial-gradient(ellipse 60% 40% at 75% 15%,rgba(205,178,132,.7) 0%,rgba(0,0,0,0) 100%),linear-gradient(180deg,#8a7a5e 0%,#7a6d53 30%,#5e5840 55%,#4a4730 80%,#38361f 100%)"><i style="position:absolute;left:0;top:15%;width:100%;height:85%;background:repeating-linear-gradient(90deg,rgba(25,25,10,.12) 0px,rgba(0,0,0,0) 1.3px,rgba(200,185,130,.07) 2.1px,rgba(0,0,0,0) 3.3px),repeating-linear-gradient(90deg,rgba(20,22,10,.09) 0px,rgba(0,0,0,0) 2px,rgba(0,0,0,0) 5.1px);-webkit-mask-image:linear-gradient(180deg,transparent 0%,#000 40%,#000 100%)"></i><b style="position:absolute;left:52%;top:14%;width:40%;height:70%;opacity:0.9"><i style="position:absolute;left:18%;top:30%;width:62%;height:66%;border-radius:40% 40% 20% 20%;background:linear-gradient(180deg,#858072 0%,#6f6a5d 50%,#4f4b42 100%)"></i><i style="position:absolute;left:6%;top:38%;width:18%;height:44%;border-radius:40%;background:#5a564c;transform:rotate(12deg)"></i><i style="position:absolute;left:58%;top:12%;width:30%;height:38%;border-radius:25%;background:#7a7466"></i><i style="position:absolute;left:22%;top:0%;width:50%;height:32%;border-radius:50%;background:radial-gradient(circle at 62% 30%,#d6cfbe 0%,#8f897b 35%,#4a473f 80%)"></i><i style="position:absolute;left:20%;top:9%;width:34%;height:20%;border-radius:50%;background:#24231f"></i><i style="position:absolute;left:48%;top:46%;width:46%;height:40%;border-radius:45% 50% 40% 45%;background:#2b6f79"></i><i style="position:absolute;left:70%;top:38%;width:26%;height:20%;border-radius:50%;background:#2e7480"></i></b></div></div><div class="thx" style="left:33px;top:225px"></div><div class="gen" style="left:9.5px;top:262.6px;width:172px"><b style="left:63.0px">Generate</b><s style="left:94.0px;width:15px;">&#8623; 6</s></div></div><div class="hd" style="left:1667.8px;top:532.6px"></div><div class="hd" style="left:1858.8px;top:532.6px"></div><div class="nd" style="left:1892.2px;top:653.4px;width:143.7px;height:159px;"><div class="ic"><svg width="17" height="17" viewBox="0 0 17 17"><g stroke="#cfcfcf" stroke-width="0.9" fill="none"><rect x="5" y="5.5" width="7.5" height="6" rx="1.2"/><path d="M5.2 9.5 L7.5 8 L12.3 10.8"/></g></svg></div><div class="ot" style="left:36px">Output</div><div class="img" style="left:10.5px;top:32px;width:117.2px;height:66.6px"><div style="position:absolute;left:0;top:0;width:100%;height:100%;overflow:hidden;background:radial-gradient(ellipse 45% 40% at 80% 25%,rgba(205,178,132,.75) 0%,rgba(190,165,120,.25) 60%,rgba(0,0,0,0) 100%),radial-gradient(ellipse 35% 55% at 18% 72%,rgba(48,50,30,.6) 0%,rgba(48,50,30,0) 100%),linear-gradient(180deg,#8e7e61 0%,#88795b 22%,#776a50 42%,#615840 60%,#514933 78%,#3d3722 100%)"><i style="position:absolute;left:0;top:15%;width:100%;height:85%;background:repeating-linear-gradient(90deg,rgba(25,25,10,.12) 0px,rgba(0,0,0,0) 1.3px,rgba(200,185,130,.07) 2.1px,rgba(0,0,0,0) 3.3px),repeating-linear-gradient(90deg,rgba(20,22,10,.09) 0px,rgba(0,0,0,0) 2px,rgba(0,0,0,0) 5.1px);-webkit-mask-image:linear-gradient(180deg,transparent 0%,#000 40%,#000 100%)"></i><i style="position:absolute;left:0;top:0;width:100%;height:100%;background:radial-gradient(ellipse 55% 60% at 20% 75%,rgba(35,38,20,.4) 0%,rgba(35,38,20,0) 100%)"></i><b style="position:absolute;left:42%;top:15%;width:22%;height:61%;opacity:0.9"><i style="position:absolute;left:18%;top:30%;width:62%;height:66%;border-radius:40% 40% 20% 20%;background:linear-gradient(180deg,#858072 0%,#6f6a5d 50%,#4f4b42 100%)"></i><i style="position:absolute;left:6%;top:38%;width:18%;height:44%;border-radius:40%;background:#5a564c;transform:rotate(12deg)"></i><i style="position:absolute;left:58%;top:12%;width:30%;height:38%;border-radius:25%;background:#7a7466"></i><i style="position:absolute;left:22%;top:0%;width:50%;height:32%;border-radius:50%;background:radial-gradient(circle at 62% 30%,#d6cfbe 0%,#8f897b 35%,#4a473f 80%)"></i><i style="position:absolute;left:20%;top:9%;width:34%;height:20%;border-radius:50%;background:#24231f"></i><i style="position:absolute;left:48%;top:46%;width:46%;height:40%;border-radius:45% 50% 40% 45%;background:#2b6f79"></i><i style="position:absolute;left:70%;top:38%;width:26%;height:20%;border-radius:50%;background:#2e7480"></i></b></div></div></div><div class="hd" style="left:1888.0px;top:667.8px"></div><div class="hd" style="left:2031.7px;top:667.8px"></div><div class="rs" style="left:2026.9px;top:803.4px"></div><div class="nd" style="left:1673.9px;top:827px;width:191px;height:288px;"><div class="ic"><svg width="17" height="17" viewBox="0 0 17 17"><g stroke="#cfcfcf" stroke-width="0.9" fill="none"><path d="M5.5 10.5 L11 6.5 M5.5 10.5 L10 12"/><circle cx="11.2" cy="6.2" r="1"/></g><path d="M6 6.5 l0.5 1.5 1.5 .5 -1.5 .5 -.5 1.5 -.5-1.5 -1.5-.5 1.5-.5z" fill="#cfcfcf"/></svg></div><div class="tt" style="left:31px">Image Generation</div><div class="id" style="left:99.8px">#003</div><div class="info" style="left:172.1px;top:14.6px"></div><div class="lb" style="left:9.5px;top:32.5px">Generation Model</div><div class="lb" style="left:97.5px;top:32.5px">Submodel</div><div class="sel" style="left:9.5px;top:41.3px;width:84px"><span style="color:#7a7a7a">Nano Banana</span><i></i></div><div class="sel" style="left:97.5px;top:41.3px;width:84px"><span style="color:#e8e8e8">Standart</span><i></i></div><div class="sh" style="left:9.5px;top:64.0px">Prompt</div><div class="car" style="left:170px;top:67.5px"></div><div class="chip" style="left:35px;top:63.5px;width:27px">&#8634; Magic</div><div class="ta" style="left:9.5px;top:79.5px;width:172px;height:48px;color:#e4e4e4">Using the provided image, keep the style and subject details
similar, and modify the camera to match this: cinematic side profile</div><div class="sm" style="left:9.5px;top:133.5px">10-1000 characters required</div><div class="sm" style="right:9.5px;top:133.5px">130/1000</div><div class="sh" style="left:9.5px;top:149px">Reference Images (1/10)</div><div class="car" style="left:170px;top:152.5px"></div><div class="dz" style="left:9.5px;top:165px;width:172px;height:51.5px"><div class="t1" style="top:7.8px">Drag and Drop files or <u>press here to upload</u> or</div><div class="gb" style="left:53.5px;top:18.8px;width:65px">Select from Gallery</div><div class="t2" style="top:36.5px">Accepts image/*</div></div><div class="th" style="left:11px;top:224px;width:28px;height:27px"><div style="position:absolute;left:0;top:0;width:100%;height:100%;overflow:hidden;background:radial-gradient(ellipse 60% 40% at 75% 15%,rgba(205,178,132,.7) 0%,rgba(0,0,0,0) 100%),linear-gradient(180deg,#8a7a5e 0%,#7a6d53 30%,#5e5840 55%,#4a4730 80%,#38361f 100%)"><i style="position:absolute;left:0;top:15%;width:100%;height:85%;background:repeating-linear-gradient(90deg,rgba(25,25,10,.12) 0px,rgba(0,0,0,0) 1.3px,rgba(200,185,130,.07) 2.1px,rgba(0,0,0,0) 3.3px),repeating-linear-gradient(90deg,rgba(20,22,10,.09) 0px,rgba(0,0,0,0) 2px,rgba(0,0,0,0) 5.1px);-webkit-mask-image:linear-gradient(180deg,transparent 0%,#000 40%,#000 100%)"></i><b style="position:absolute;left:52%;top:14%;width:40%;height:70%;opacity:0.9"><i style="position:absolute;left:18%;top:30%;width:62%;height:66%;border-radius:40% 40% 20% 20%;background:linear-gradient(180deg,#858072 0%,#6f6a5d 50%,#4f4b42 100%)"></i><i style="position:absolute;left:6%;top:38%;width:18%;height:44%;border-radius:40%;background:#5a564c;transform:rotate(12deg)"></i><i style="position:absolute;left:58%;top:12%;width:30%;height:38%;border-radius:25%;background:#7a7466"></i><i style="position:absolute;left:22%;top:0%;width:50%;height:32%;border-radius:50%;background:radial-gradient(circle at 62% 30%,#d6cfbe 0%,#8f897b 35%,#4a473f 80%)"></i><i style="position:absolute;left:20%;top:9%;width:34%;height:20%;border-radius:50%;background:#24231f"></i><i style="position:absolute;left:48%;top:46%;width:46%;height:40%;border-radius:45% 50% 40% 45%;background:#2b6f79"></i><i style="position:absolute;left:70%;top:38%;width:26%;height:20%;border-radius:50%;background:#2e7480"></i></b></div></div><div class="thx" style="left:33px;top:225px"></div><div class="gen" style="left:9.5px;top:262.6px;width:172px"><b style="left:63.0px">Generate</b><s style="left:94.0px;width:15px;">&#8623; 6</s></div></div><div class="hd" style="left:1669.7px;top:841.4px"></div><div class="hd" style="left:1860.7px;top:841.4px"></div><div class="nd" style="left:1891.3px;top:828.2px;width:143.8px;height:159px;"><div class="ic"><svg width="17" height="17" viewBox="0 0 17 17"><g stroke="#cfcfcf" stroke-width="0.9" fill="none"><rect x="5" y="5.5" width="7.5" height="6" rx="1.2"/><path d="M5.2 9.5 L7.5 8 L12.3 10.8"/></g></svg></div><div class="ot" style="left:36px">Output</div><div class="img" style="left:10.5px;top:32px;width:117.3px;height:65.8px"><div style="position:absolute;left:0;top:0;width:100%;height:100%;overflow:hidden;background:radial-gradient(ellipse 45% 40% at 80% 25%,rgba(205,178,132,.75) 0%,rgba(190,165,120,.25) 60%,rgba(0,0,0,0) 100%),radial-gradient(ellipse 35% 55% at 18% 72%,rgba(48,50,30,.6) 0%,rgba(48,50,30,0) 100%),linear-gradient(180deg,#8e7e61 0%,#88795b 22%,#776a50 42%,#615840 60%,#514933 78%,#3d3722 100%)"><i style="position:absolute;left:0;top:15%;width:100%;height:85%;background:repeating-linear-gradient(90deg,rgba(25,25,10,.12) 0px,rgba(0,0,0,0) 1.3px,rgba(200,185,130,.07) 2.1px,rgba(0,0,0,0) 3.3px),repeating-linear-gradient(90deg,rgba(20,22,10,.09) 0px,rgba(0,0,0,0) 2px,rgba(0,0,0,0) 5.1px);-webkit-mask-image:linear-gradient(180deg,transparent 0%,#000 40%,#000 100%)"></i><i style="position:absolute;left:0;top:0;width:100%;height:100%;background:radial-gradient(ellipse 55% 60% at 20% 75%,rgba(35,38,20,.4) 0%,rgba(35,38,20,0) 100%)"></i><b style="position:absolute;left:58%;top:19%;width:19%;height:58%;opacity:0.9"><i style="position:absolute;left:18%;top:30%;width:62%;height:66%;border-radius:40% 40% 20% 20%;background:linear-gradient(180deg,#858072 0%,#6f6a5d 50%,#4f4b42 100%)"></i><i style="position:absolute;left:6%;top:38%;width:18%;height:44%;border-radius:40%;background:#5a564c;transform:rotate(12deg)"></i><i style="position:absolute;left:58%;top:12%;width:30%;height:38%;border-radius:25%;background:#7a7466"></i><i style="position:absolute;left:22%;top:0%;width:50%;height:32%;border-radius:50%;background:radial-gradient(circle at 62% 30%,#d6cfbe 0%,#8f897b 35%,#4a473f 80%)"></i><i style="position:absolute;left:20%;top:9%;width:34%;height:20%;border-radius:50%;background:#24231f"></i><i style="position:absolute;left:48%;top:46%;width:46%;height:40%;border-radius:45% 50% 40% 45%;background:#2b6f79"></i><i style="position:absolute;left:70%;top:38%;width:26%;height:20%;border-radius:50%;background:#2e7480"></i></b></div></div></div><div class="hd" style="left:1887.1px;top:842.6px"></div><div class="hd" style="left:2030.9px;top:842.6px"></div><div class="rs" style="left:2026.1px;top:978.2px"></div><div class="nd" style="left:533.4px;top:1184.4px;width:191px;height:288px;"><div class="ic"><svg width="17" height="17" viewBox="0 0 17 17"><g stroke="#cfcfcf" stroke-width="0.9" fill="none"><path d="M5.5 10.5 L11 6.5 M5.5 10.5 L10 12"/><circle cx="11.2" cy="6.2" r="1"/></g><path d="M6 6.5 l0.5 1.5 1.5 .5 -1.5 .5 -.5 1.5 -.5-1.5 -1.5-.5 1.5-.5z" fill="#cfcfcf"/></svg></div><div class="tt" style="left:31px">Image Generation</div><div class="id" style="left:99.8px">#006</div><div class="info" style="left:172.1px;top:14.6px"></div><div class="lb" style="left:9.5px;top:32.5px">Generation Model</div><div class="lb" style="left:97.5px;top:32.5px">Submodel</div><div class="sel" style="left:9.5px;top:41.3px;width:84px"><span style="color:#7a7a7a">Nano Banana</span><i></i></div><div class="sel" style="left:97.5px;top:41.3px;width:84px"><span style="color:#e8e8e8">Standart</span><i></i></div><div class="sh" style="left:9.5px;top:64.0px">Prompt</div><div class="car" style="left:170px;top:67.5px"></div><div class="chip" style="left:35px;top:63.5px;width:27px">&#8634; Magic</div><div class="ta" style="left:9.5px;top:79.5px;width:172px;height:48px;color:#e4e4e4">Using the provided image, keep the style and subject details
similar, and modify the camera to match this: extreme long shot
where the subject appears tiny within a vast environment,
emphasizing emptiness, atmosphere, and cinematic scale.</div><div class="sm" style="left:9.5px;top:133.5px">10-1000 characters required</div><div class="sm" style="right:9.5px;top:133.5px">238/1000</div><div class="sh" style="left:9.5px;top:149px">Reference Images (1/10)</div><div class="car" style="left:170px;top:152.5px"></div><div class="dz" style="left:9.5px;top:165px;width:172px;height:51.5px"><div class="t1" style="top:7.8px">Drag and Drop files or <u>press here to upload</u> or</div><div class="gb" style="left:53.5px;top:18.8px;width:65px">Select from Gallery</div><div class="t2" style="top:36.5px">Accepts image/*</div></div><div class="th" style="left:11px;top:224px;width:28px;height:27px"><div style="position:absolute;left:0;top:0;width:100%;height:100%;overflow:hidden;background:radial-gradient(ellipse 60% 40% at 75% 15%,rgba(205,178,132,.7) 0%,rgba(0,0,0,0) 100%),linear-gradient(180deg,#8a7a5e 0%,#7a6d53 30%,#5e5840 55%,#4a4730 80%,#38361f 100%)"><i style="position:absolute;left:0;top:15%;width:100%;height:85%;background:repeating-linear-gradient(90deg,rgba(25,25,10,.12) 0px,rgba(0,0,0,0) 1.3px,rgba(200,185,130,.07) 2.1px,rgba(0,0,0,0) 3.3px),repeating-linear-gradient(90deg,rgba(20,22,10,.09) 0px,rgba(0,0,0,0) 2px,rgba(0,0,0,0) 5.1px);-webkit-mask-image:linear-gradient(180deg,transparent 0%,#000 40%,#000 100%)"></i><b style="position:absolute;left:52%;top:14%;width:40%;height:70%;opacity:0.9"><i style="position:absolute;left:18%;top:30%;width:62%;height:66%;border-radius:40% 40% 20% 20%;background:linear-gradient(180deg,#858072 0%,#6f6a5d 50%,#4f4b42 100%)"></i><i style="position:absolute;left:6%;top:38%;width:18%;height:44%;border-radius:40%;background:#5a564c;transform:rotate(12deg)"></i><i style="position:absolute;left:58%;top:12%;width:30%;height:38%;border-radius:25%;background:#7a7466"></i><i style="position:absolute;left:22%;top:0%;width:50%;height:32%;border-radius:50%;background:radial-gradient(circle at 62% 30%,#d6cfbe 0%,#8f897b 35%,#4a473f 80%)"></i><i style="position:absolute;left:20%;top:9%;width:34%;height:20%;border-radius:50%;background:#24231f"></i><i style="position:absolute;left:48%;top:46%;width:46%;height:40%;border-radius:45% 50% 40% 45%;background:#2b6f79"></i><i style="position:absolute;left:70%;top:38%;width:26%;height:20%;border-radius:50%;background:#2e7480"></i></b></div></div><div class="thx" style="left:33px;top:225px"></div><div class="gen" style="left:9.5px;top:262.6px;width:172px"><b style="left:63.0px">Generate</b><s style="left:94.0px;width:15px;">&#8623; 6</s></div></div><div class="hd" style="left:529.2px;top:1198.8px"></div><div class="hd" style="left:720.2px;top:1198.8px"></div><div class="nd" style="left:743px;top:1186.3px;width:143.6px;height:159px;"><div class="ic"><svg width="17" height="17" viewBox="0 0 17 17"><g stroke="#cfcfcf" stroke-width="0.9" fill="none"><rect x="5" y="5.5" width="7.5" height="6" rx="1.2"/><path d="M5.2 9.5 L7.5 8 L12.3 10.8"/></g></svg></div><div class="ot" style="left:36px">Output</div><div class="img" style="left:10.5px;top:32px;width:117.1px;height:65.9px"><div style="position:absolute;left:0;top:0;width:100%;height:100%;overflow:hidden;background:linear-gradient(110deg,rgba(35,30,20,.45) 0%,rgba(0,0,0,0) 45%),radial-gradient(ellipse 45% 16% at 80% 52%,rgba(240,224,175,.9) 0%,rgba(220,200,150,.35) 60%,rgba(0,0,0,0) 100%),linear-gradient(180deg,#6e604a 0%,#9a8666 25%,#b09c78 45%,#8a7c5a 56%,#5a5436 68%,#423e28 84%,#2c2a1b 100%)"><b style="position:absolute;left:50%;top:45%;width:7%;height:24%;opacity:0.85"><i style="position:absolute;left:18%;top:30%;width:62%;height:66%;border-radius:40% 40% 20% 20%;background:linear-gradient(180deg,#858072 0%,#6f6a5d 50%,#4f4b42 100%)"></i><i style="position:absolute;left:6%;top:38%;width:18%;height:44%;border-radius:40%;background:#5a564c;transform:rotate(12deg)"></i><i style="position:absolute;left:58%;top:12%;width:30%;height:38%;border-radius:25%;background:#7a7466"></i><i style="position:absolute;left:22%;top:0%;width:50%;height:32%;border-radius:50%;background:radial-gradient(circle at 62% 30%,#d6cfbe 0%,#8f897b 35%,#4a473f 80%)"></i><i style="position:absolute;left:20%;top:9%;width:34%;height:20%;border-radius:50%;background:#24231f"></i><i style="position:absolute;left:48%;top:46%;width:46%;height:40%;border-radius:45% 50% 40% 45%;background:#2b6f79"></i><i style="position:absolute;left:70%;top:38%;width:26%;height:20%;border-radius:50%;background:#2e7480"></i></b></div></div></div><div class="hd" style="left:738.8px;top:1200.7px"></div><div class="hd" style="left:882.4px;top:1200.7px"></div><div class="rs" style="left:877.6px;top:1336.3px"></div><div class="nd" style="left:913.8px;top:1184.4px;width:191px;height:288px;"><div class="ic"><svg width="17" height="17" viewBox="0 0 17 17"><g stroke="#cfcfcf" stroke-width="0.9" fill="none"><path d="M5.5 10.5 L11 6.5 M5.5 10.5 L10 12"/><circle cx="11.2" cy="6.2" r="1"/></g><path d="M6 6.5 l0.5 1.5 1.5 .5 -1.5 .5 -.5 1.5 -.5-1.5 -1.5-.5 1.5-.5z" fill="#cfcfcf"/></svg></div><div class="tt" style="left:31px">Image Generation</div><div class="id" style="left:99.8px">#007</div><div class="info" style="left:172.1px;top:14.6px"></div><div class="lb" style="left:9.5px;top:32.5px">Generation Model</div><div class="lb" style="left:97.5px;top:32.5px">Submodel</div><div class="sel" style="left:9.5px;top:41.3px;width:84px"><span style="color:#7a7a7a">Nano Banana</span><i></i></div><div class="sel" style="left:97.5px;top:41.3px;width:84px"><span style="color:#e8e8e8">Standart</span><i></i></div><div class="sh" style="left:9.5px;top:64.0px">Prompt</div><div class="car" style="left:170px;top:67.5px"></div><div class="chip" style="left:35px;top:63.5px;width:27px">&#8634; Magic</div><div class="ta" style="left:9.5px;top:79.5px;width:172px;height:48px;color:#e4e4e4">Using the provided image, keep the style and subject details
similar, and modify the camera to match this: a very distant bird’s-
eye view showing the entire scene from high above, with vast
space, atmospheric depth, and subtle light gradients.</div><div class="sm" style="left:9.5px;top:133.5px">10-1000 characters required</div><div class="sm" style="right:9.5px;top:133.5px">243/1000</div><div class="sh" style="left:9.5px;top:149px">Reference Images (1/10)</div><div class="car" style="left:170px;top:152.5px"></div><div class="dz" style="left:9.5px;top:165px;width:172px;height:51.5px"><div class="t1" style="top:7.8px">Drag and Drop files or <u>press here to upload</u> or</div><div class="gb" style="left:53.5px;top:18.8px;width:65px">Select from Gallery</div><div class="t2" style="top:36.5px">Accepts image/*</div></div><div class="th" style="left:11px;top:224px;width:28px;height:27px"><div style="position:absolute;left:0;top:0;width:100%;height:100%;overflow:hidden;background:radial-gradient(ellipse 60% 40% at 75% 15%,rgba(205,178,132,.7) 0%,rgba(0,0,0,0) 100%),linear-gradient(180deg,#8a7a5e 0%,#7a6d53 30%,#5e5840 55%,#4a4730 80%,#38361f 100%)"><i style="position:absolute;left:0;top:15%;width:100%;height:85%;background:repeating-linear-gradient(90deg,rgba(25,25,10,.12) 0px,rgba(0,0,0,0) 1.3px,rgba(200,185,130,.07) 2.1px,rgba(0,0,0,0) 3.3px),repeating-linear-gradient(90deg,rgba(20,22,10,.09) 0px,rgba(0,0,0,0) 2px,rgba(0,0,0,0) 5.1px);-webkit-mask-image:linear-gradient(180deg,transparent 0%,#000 40%,#000 100%)"></i><b style="position:absolute;left:52%;top:14%;width:40%;height:70%;opacity:0.9"><i style="position:absolute;left:18%;top:30%;width:62%;height:66%;border-radius:40% 40% 20% 20%;background:linear-gradient(180deg,#858072 0%,#6f6a5d 50%,#4f4b42 100%)"></i><i style="position:absolute;left:6%;top:38%;width:18%;height:44%;border-radius:40%;background:#5a564c;transform:rotate(12deg)"></i><i style="position:absolute;left:58%;top:12%;width:30%;height:38%;border-radius:25%;background:#7a7466"></i><i style="position:absolute;left:22%;top:0%;width:50%;height:32%;border-radius:50%;background:radial-gradient(circle at 62% 30%,#d6cfbe 0%,#8f897b 35%,#4a473f 80%)"></i><i style="position:absolute;left:20%;top:9%;width:34%;height:20%;border-radius:50%;background:#24231f"></i><i style="position:absolute;left:48%;top:46%;width:46%;height:40%;border-radius:45% 50% 40% 45%;background:#2b6f79"></i><i style="position:absolute;left:70%;top:38%;width:26%;height:20%;border-radius:50%;background:#2e7480"></i></b></div></div><div class="thx" style="left:33px;top:225px"></div><div class="gen" style="left:9.5px;top:262.6px;width:172px"><b style="left:63.0px">Generate</b><s style="left:94.0px;width:15px;">&#8623; 6</s></div></div><div class="hd" style="left:909.6px;top:1198.8px"></div><div class="hd" style="left:1100.6px;top:1198.8px"></div><div class="nd" style="left:1124.6px;top:1187.2px;width:143px;height:159px;"><div class="ic"><svg width="17" height="17" viewBox="0 0 17 17"><g stroke="#cfcfcf" stroke-width="0.9" fill="none"><rect x="5" y="5.5" width="7.5" height="6" rx="1.2"/><path d="M5.2 9.5 L7.5 8 L12.3 10.8"/></g></svg></div><div class="ot" style="left:36px">Output</div><div class="img" style="left:10.5px;top:32px;width:116.5px;height:66.2px"><div style="position:absolute;left:0;top:0;width:100%;height:100%;overflow:hidden;background:radial-gradient(ellipse 45% 35% at 88% 18%,rgba(215,195,145,.7) 0%,rgba(0,0,0,0) 100%),linear-gradient(180deg,#6e7372 0%,#77786a 18%,#696948 40%,#5a5c38 65%,#494b2b 100%)"><b style="position:absolute;left:50%;top:46%;width:3%;height:12%;opacity:0.8"><i style="position:absolute;left:18%;top:30%;width:62%;height:66%;border-radius:40% 40% 20% 20%;background:linear-gradient(180deg,#858072 0%,#6f6a5d 50%,#4f4b42 100%)"></i><i style="position:absolute;left:6%;top:38%;width:18%;height:44%;border-radius:40%;background:#5a564c;transform:rotate(12deg)"></i><i style="position:absolute;left:58%;top:12%;width:30%;height:38%;border-radius:25%;background:#7a7466"></i><i style="position:absolute;left:22%;top:0%;width:50%;height:32%;border-radius:50%;background:radial-gradient(circle at 62% 30%,#d6cfbe 0%,#8f897b 35%,#4a473f 80%)"></i><i style="position:absolute;left:20%;top:9%;width:34%;height:20%;border-radius:50%;background:#24231f"></i></b></div></div></div><div class="hd" style="left:1120.4px;top:1201.6px"></div><div class="hd" style="left:1263.4px;top:1201.6px"></div><div class="rs" style="left:1258.6px;top:1337.2px"></div><div class="nd" style="left:2094.3px;top:644.6px;width:169px;height:390.2px;"><div class="ic"><svg width="17" height="17" viewBox="0 0 17 17"><g stroke="#cfcfcf" stroke-width="0.9" fill="none"><rect x="5" y="5.5" width="7.5" height="6" rx="1.2"/><path d="M5.2 9.5 L7.5 8 L12.3 10.8"/></g></svg></div><div class="tt" style="left:31px">Comment</div><div class="id" style="left:74.0px">#001</div><div class="ct" style="left:14.5px;top:36.5px;font-size:6.5px">For better camera control and context
alignment, upload your image together with the
prompt below into the assistant.
You can freely describe any custom camera
angles and shot sizes from your imagination, or
simply insert one of the provided prompts.
The generated results can be used in any nodes
— newly created or existing ones.

------------------------------------


You are given a reference image of a scene. Your
task is to create 10 high-quality image prompts
designed for the Nano Banana editing model,
using the reference image only for style and
subject details.

Requirements:
    •  Each prompt must begin exactly with:
"Using the provided image, keep the style and
subject details similar, and modify the camera to
match this:"
    •  After that phrase, describe a compositionally
different camera perspective. Go beyond angle
shifts—require radically distinct framings such as:
    •  Cropping (partial subject)
    •  Close-up on details (hands, face, textures)
    •  Wide establishing shot with subject
minimized
    •  Extreme perspectives (bird’s-eye, worm’s-
eye, tilted frames)
    •  Foreground blocking the subject
    •  Focus/blur variations (depth of field)
    •  Silhouettes or backlit shots
    •  Each prompt must highlight a different
element from the scene (foreground,
background, lighting, atmosphere, objects).
    •  Prompts must change the composition
significantly while maintaining the same style.
    •  Keep every prompt under 30 words.
    •  Separate prompts with an asterisk (*). No
numbering or prefixes.</div></div><div class="nd" style="left:2312.4px;top:470.5px;width:182.5px;height:134px;"><div class="ic"><svg width="17" height="17" viewBox="0 0 17 17"><g stroke="#cfcfcf" stroke-width="0.9" fill="none"><rect x="5" y="5.5" width="7.5" height="6" rx="1.2"/><path d="M5.2 9.5 L7.5 8 L12.3 10.8"/></g></svg></div><div class="tt" style="left:31px">Comment</div><div class="id" style="left:74.0px">#002</div><div class="ct" style="left:14.5px;top:36.5px;font-size:6.3px">For best results in subsequent video generations, it’s
recommended to upscale the generated images first.
You can also connect upscale nodes, or simply use
drag and drop (the hand tool).</div></div><div class="nd" style="left:2309px;top:621.5px;width:191.2px;height:167px;"><div class="ic"><svg width="17" height="17" viewBox="0 0 17 17"><g stroke="#cfcfcf" stroke-width="0.9" fill="none"><path d="M5 7 V5 H7 M10 5 H12 V7 M12 10 V12 H10 M7 12 H5 V10"/></g></svg></div><div class="tt" style="left:31px">Image Edit</div><div class="id" style="left:77.0px">#002</div><div class="info" style="left:172.3px;top:14.6px"></div><div class="lb" style="left:9.5px;top:32.5px">Generation Model</div><div class="lb" style="left:97.5px;top:32.5px">Submodel</div><div class="sel" style="left:9.5px;top:41.3px;width:84px"><span style="color:#7a7a7a">Image upscale</span><i></i></div><div class="sel" style="left:97.5px;top:41.3px;width:84px"><span style="color:#e8e8e8">Clarity upscaler</span><i></i></div><div class="sh" style="left:9.5px;top:65px">Reference Image</div><div class="car" style="left:170px;top:68.5px"></div><div class="dz" style="left:9.7px;top:80.3px;width:172px;height:51.5px;background:#333;border-color:#2c4f57"></div><div class="th" style="left:75.3px;top:86px;width:40.6px;height:40px"><div style="position:absolute;left:0;top:0;width:100%;height:100%;overflow:hidden;background:radial-gradient(ellipse 60% 40% at 75% 15%,rgba(205,178,132,.7) 0%,rgba(0,0,0,0) 100%),linear-gradient(180deg,#8a7a5e 0%,#7a6d53 30%,#5e5840 55%,#4a4730 80%,#38361f 100%)"><i style="position:absolute;left:0;top:15%;width:100%;height:85%;background:repeating-linear-gradient(90deg,rgba(25,25,10,.12) 0px,rgba(0,0,0,0) 1.3px,rgba(200,185,130,.07) 2.1px,rgba(0,0,0,0) 3.3px),repeating-linear-gradient(90deg,rgba(20,22,10,.09) 0px,rgba(0,0,0,0) 2px,rgba(0,0,0,0) 5.1px);-webkit-mask-image:linear-gradient(180deg,transparent 0%,#000 40%,#000 100%)"></i><b style="position:absolute;left:52%;top:14%;width:40%;height:70%;opacity:0.9"><i style="position:absolute;left:18%;top:30%;width:62%;height:66%;border-radius:40% 40% 20% 20%;background:linear-gradient(180deg,#858072 0%,#6f6a5d 50%,#4f4b42 100%)"></i><i style="position:absolute;left:6%;top:38%;width:18%;height:44%;border-radius:40%;background:#5a564c;transform:rotate(12deg)"></i><i style="position:absolute;left:58%;top:12%;width:30%;height:38%;border-radius:25%;background:#7a7466"></i><i style="position:absolute;left:22%;top:0%;width:50%;height:32%;border-radius:50%;background:radial-gradient(circle at 62% 30%,#d6cfbe 0%,#8f897b 35%,#4a473f 80%)"></i><i style="position:absolute;left:20%;top:9%;width:34%;height:20%;border-radius:50%;background:#24231f"></i><i style="position:absolute;left:48%;top:46%;width:46%;height:40%;border-radius:45% 50% 40% 45%;background:#2b6f79"></i><i style="position:absolute;left:70%;top:38%;width:26%;height:20%;border-radius:50%;background:#2e7480"></i></b></div></div><div class="gen" style="left:9.5px;top:141.5px;width:172px"><b style="left:63.0px">Generate</b><s style="left:94.0px;width:15px;">&#8623; 13</s></div></div><div class="hd" style="left:2304.8px;top:635.9px"></div><div class="hd" style="left:2496.0px;top:635.9px"></div><div class="nd" style="left:2512px;top:624px;width:143.9px;height:159px;"><div class="ic"><svg width="17" height="17" viewBox="0 0 17 17"><g stroke="#cfcfcf" stroke-width="0.9" fill="none"><rect x="5" y="5.5" width="7.5" height="6" rx="1.2"/><path d="M5.2 9.5 L7.5 8 L12.3 10.8"/></g></svg></div><div class="ot" style="left:36px">Output</div><div class="img" style="left:10.5px;top:32px;width:117.4px;height:66px"><div style="position:absolute;left:0;top:0;width:100%;height:100%;overflow:hidden;background:radial-gradient(ellipse 45% 40% at 80% 25%,rgba(205,178,132,.75) 0%,rgba(190,165,120,.25) 60%,rgba(0,0,0,0) 100%),radial-gradient(ellipse 35% 55% at 18% 72%,rgba(48,50,30,.6) 0%,rgba(48,50,30,0) 100%),linear-gradient(180deg,#8e7e61 0%,#88795b 22%,#776a50 42%,#615840 60%,#514933 78%,#3d3722 100%)"><i style="position:absolute;left:0;top:15%;width:100%;height:85%;background:repeating-linear-gradient(90deg,rgba(25,25,10,.12) 0px,rgba(0,0,0,0) 1.3px,rgba(200,185,130,.07) 2.1px,rgba(0,0,0,0) 3.3px),repeating-linear-gradient(90deg,rgba(20,22,10,.09) 0px,rgba(0,0,0,0) 2px,rgba(0,0,0,0) 5.1px);-webkit-mask-image:linear-gradient(180deg,transparent 0%,#000 40%,#000 100%)"></i><i style="position:absolute;left:0;top:0;width:100%;height:100%;background:radial-gradient(ellipse 55% 60% at 20% 75%,rgba(35,38,20,.4) 0%,rgba(35,38,20,0) 100%)"></i><b style="position:absolute;left:58%;top:19%;width:19%;height:58%;opacity:0.9"><i style="position:absolute;left:18%;top:30%;width:62%;height:66%;border-radius:40% 40% 20% 20%;background:linear-gradient(180deg,#858072 0%,#6f6a5d 50%,#4f4b42 100%)"></i><i style="position:absolute;left:6%;top:38%;width:18%;height:44%;border-radius:40%;background:#5a564c;transform:rotate(12deg)"></i><i style="position:absolute;left:58%;top:12%;width:30%;height:38%;border-radius:25%;background:#7a7466"></i><i style="position:absolute;left:22%;top:0%;width:50%;height:32%;border-radius:50%;background:radial-gradient(circle at 62% 30%,#d6cfbe 0%,#8f897b 35%,#4a473f 80%)"></i><i style="position:absolute;left:20%;top:9%;width:34%;height:20%;border-radius:50%;background:#24231f"></i><i style="position:absolute;left:48%;top:46%;width:46%;height:40%;border-radius:45% 50% 40% 45%;background:#2b6f79"></i><i style="position:absolute;left:70%;top:38%;width:26%;height:20%;border-radius:50%;background:#2e7480"></i></b></div></div></div><div class="hd" style="left:2507.8px;top:638.4px"></div><div class="hd" style="left:2651.7px;top:638.4px"></div><div class="rs" style="left:2646.9px;top:774.0px"></div><div class="nd" style="left:2312.5px;top:1014.4px;width:161.6px;height:117px;"><div class="ic"><svg width="17" height="17" viewBox="0 0 17 17"><g stroke="#cfcfcf" stroke-width="0.9" fill="none"><rect x="5" y="5.5" width="7.5" height="6" rx="1.2"/><path d="M5.2 9.5 L7.5 8 L12.3 10.8"/></g></svg></div><div class="tt" style="left:31px">Comment</div><div class="id" style="left:74.0px">#005</div><div class="ct" style="left:14.5px;top:36.5px;font-size:6.3px">You can create an entire story from a single
image by simply connecting the starting and
ending frames using the Kling model, with full
control over character consistency throughout
the sequence.</div></div><div class="nd" style="left:2515.8px;top:1018px;width:136.2px;height:111px;"><div class="ic"><svg width="17" height="17" viewBox="0 0 17 17"><g stroke="#cfcfcf" stroke-width="0.9" fill="none"><rect x="5" y="5.5" width="7.5" height="6" rx="1.2"/><path d="M5.2 9.5 L7.5 8 L12.3 10.8"/></g></svg></div><div class="tt" style="left:31px">Comment</div><div class="id" style="left:74.0px">#006</div><div class="ct" style="left:14.5px;top:36.5px;font-size:6.3px">Animate your image using any
available video generation model. To
access all available models, right-click
with your mouse.</div></div><div class="nd" style="left:2308.6px;top:1139px;width:191.9px;height:346.2px;"><div class="ic"><svg width="17" height="17" viewBox="0 0 17 17"><g stroke="#cfcfcf" stroke-width="0.9" fill="none"><rect x="4.5" y="6" width="6" height="5" rx="1"/><path d="M10.5 8 L12.5 6.8 V10.2 L10.5 9"/></g></svg></div><div class="tt" style="left:31px">Video Generation</div><div class="id" style="left:98.0px">#001</div><div class="info" style="left:173.0px;top:14.6px"></div><div class="lb" style="left:9.5px;top:32.5px">Generation Model</div><div class="lb" style="left:97.5px;top:32.5px">Submodel</div><div class="sel" style="left:9.5px;top:41.3px;width:84px"><span style="color:#7a7a7a">Kling</span><i></i></div><div class="sel" style="left:97.5px;top:41.3px;width:84px"><span style="color:#e8e8e8">2.1 Master</span><i></i></div><div class="sh" style="left:9.5px;top:63.8px">Prompt</div><div class="car" style="left:170px;top:67.3px"></div><div class="chip" style="left:35px;top:63.3px;width:27px">&#8634; Magic</div><div class="ta" style="left:9.5px;top:79.3px;width:172px;height:48px;color:#e4e4e4">The astronaut looks around and takes a few slow steps, the camera
rotates around him to move to the next frame. Muted colors.</div><div class="sm" style="left:9.5px;top:133.3px">10-1000 characters required</div><div class="sm" style="right:9.5px;top:133.3px">128/1000</div><div class="sh" style="left:9.5px;top:149.2px">References</div><div class="car" style="left:170px;top:152.7px"></div><div class="th" style="left:10.2px;top:164.8px;width:53.5px;height:53px"><div style="position:absolute;left:0;top:0;width:100%;height:100%;overflow:hidden;background:radial-gradient(ellipse 60% 40% at 75% 15%,rgba(205,178,132,.7) 0%,rgba(0,0,0,0) 100%),linear-gradient(180deg,#8a7a5e 0%,#7a6d53 30%,#5e5840 55%,#4a4730 80%,#38361f 100%)"><i style="position:absolute;left:0;top:15%;width:100%;height:85%;background:repeating-linear-gradient(90deg,rgba(25,25,10,.12) 0px,rgba(0,0,0,0) 1.3px,rgba(200,185,130,.07) 2.1px,rgba(0,0,0,0) 3.3px),repeating-linear-gradient(90deg,rgba(20,22,10,.09) 0px,rgba(0,0,0,0) 2px,rgba(0,0,0,0) 5.1px);-webkit-mask-image:linear-gradient(180deg,transparent 0%,#000 40%,#000 100%)"></i><b style="position:absolute;left:52%;top:14%;width:40%;height:70%;opacity:0.9"><i style="position:absolute;left:18%;top:30%;width:62%;height:66%;border-radius:40% 40% 20% 20%;background:linear-gradient(180deg,#858072 0%,#6f6a5d 50%,#4f4b42 100%)"></i><i style="position:absolute;left:6%;top:38%;width:18%;height:44%;border-radius:40%;background:#5a564c;transform:rotate(12deg)"></i><i style="position:absolute;left:58%;top:12%;width:30%;height:38%;border-radius:25%;background:#7a7466"></i><i style="position:absolute;left:22%;top:0%;width:50%;height:32%;border-radius:50%;background:radial-gradient(circle at 62% 30%,#d6cfbe 0%,#8f897b 35%,#4a473f 80%)"></i><i style="position:absolute;left:20%;top:9%;width:34%;height:20%;border-radius:50%;background:#24231f"></i><i style="position:absolute;left:48%;top:46%;width:46%;height:40%;border-radius:45% 50% 40% 45%;background:#2b6f79"></i><i style="position:absolute;left:70%;top:38%;width:26%;height:20%;border-radius:50%;background:#2e7480"></i></b></div></div><div class="thx" style="left:57.7px;top:165.8px"></div><div class="th" style="left:69.6px;top:164.8px;width:53px;height:53px"><div style="position:absolute;left:0;top:0;width:100%;height:100%;overflow:hidden;background:radial-gradient(ellipse 60% 40% at 75% 15%,rgba(205,178,132,.7) 0%,rgba(0,0,0,0) 100%),linear-gradient(180deg,#8a7a5e 0%,#7a6d53 30%,#5e5840 55%,#4a4730 80%,#38361f 100%)"><i style="position:absolute;left:0;top:15%;width:100%;height:85%;background:repeating-linear-gradient(90deg,rgba(25,25,10,.12) 0px,rgba(0,0,0,0) 1.3px,rgba(200,185,130,.07) 2.1px,rgba(0,0,0,0) 3.3px),repeating-linear-gradient(90deg,rgba(20,22,10,.09) 0px,rgba(0,0,0,0) 2px,rgba(0,0,0,0) 5.1px);-webkit-mask-image:linear-gradient(180deg,transparent 0%,#000 40%,#000 100%)"></i><b style="position:absolute;left:52%;top:14%;width:40%;height:70%;opacity:0.9"><i style="position:absolute;left:18%;top:30%;width:62%;height:66%;border-radius:40% 40% 20% 20%;background:linear-gradient(180deg,#858072 0%,#6f6a5d 50%,#4f4b42 100%)"></i><i style="position:absolute;left:6%;top:38%;width:18%;height:44%;border-radius:40%;background:#5a564c;transform:rotate(12deg)"></i><i style="position:absolute;left:58%;top:12%;width:30%;height:38%;border-radius:25%;background:#7a7466"></i><i style="position:absolute;left:22%;top:0%;width:50%;height:32%;border-radius:50%;background:radial-gradient(circle at 62% 30%,#d6cfbe 0%,#8f897b 35%,#4a473f 80%)"></i><i style="position:absolute;left:20%;top:9%;width:34%;height:20%;border-radius:50%;background:#24231f"></i><i style="position:absolute;left:48%;top:46%;width:46%;height:40%;border-radius:45% 50% 40% 45%;background:#2b6f79"></i><i style="position:absolute;left:70%;top:38%;width:26%;height:20%;border-radius:50%;background:#2e7480"></i></b></div></div><div class="thx" style="left:116.6px;top:165.8px"></div><div class="lb" style="left:10.2px;width:53.5px;text-align:center;top:221.5px">Start Image</div><div class="lb" style="left:69.6px;width:53px;text-align:center;top:221.5px">Last Frame</div><div class="sh" style="left:9.5px;top:239px">Aspect Ratio</div><div class="car" style="left:170px;top:242.5px"></div><div class="abs" style="left:9.3px;top:254px;width:173px;height:13.5px;border-radius:3px;background:#3a3326"><span style="position:absolute;left:4px;top:3.5px;font-size:5px;line-height:6px;color:#ddd">Using input image aspect ratio</span></div><div class="sel" style="left:9.5px;top:272px;width:144px;height:13px"><span style="color:#888">1:1</span><i></i></div><div class="rbtn" style="left:156.3px;top:272px;width:26px"><i></i></div><div class="sh" style="left:9.5px;top:296px">Camera Angle</div><div class="car" style="left:170px;top:299.5px"></div><div class="gen" style="left:9.5px;top:320.2px;width:172px"><b style="left:63.0px">Generate</b><s style="left:94.0px;width:15px;">&#8623; 84</s></div></div><div class="hd" style="left:2304.4px;top:1153.4px"></div><div class="hd" style="left:2496.3px;top:1153.4px"></div><div class="nd" style="left:2515px;top:1140.8px;width:143.7px;height:159px;"><div class="ic"><svg width="17" height="17" viewBox="0 0 17 17"><g stroke="#cfcfcf" stroke-width="0.9" fill="none"><rect x="5" y="5.5" width="7.5" height="6" rx="1.2"/><path d="M5.2 9.5 L7.5 8 L12.3 10.8"/></g></svg></div><div class="ot" style="left:36px">Output</div><div class="img" style="left:10.5px;top:32px;width:117.2px;height:65px"><div style="position:absolute;left:0;top:0;width:100%;height:100%;overflow:hidden;background:radial-gradient(ellipse 45% 40% at 80% 25%,rgba(205,178,132,.75) 0%,rgba(190,165,120,.25) 60%,rgba(0,0,0,0) 100%),radial-gradient(ellipse 35% 55% at 18% 72%,rgba(48,50,30,.6) 0%,rgba(48,50,30,0) 100%),linear-gradient(180deg,#8e7e61 0%,#88795b 22%,#776a50 42%,#615840 60%,#514933 78%,#3d3722 100%)"><i style="position:absolute;left:0;top:15%;width:100%;height:85%;background:repeating-linear-gradient(90deg,rgba(25,25,10,.12) 0px,rgba(0,0,0,0) 1.3px,rgba(200,185,130,.07) 2.1px,rgba(0,0,0,0) 3.3px),repeating-linear-gradient(90deg,rgba(20,22,10,.09) 0px,rgba(0,0,0,0) 2px,rgba(0,0,0,0) 5.1px);-webkit-mask-image:linear-gradient(180deg,transparent 0%,#000 40%,#000 100%)"></i><i style="position:absolute;left:0;top:0;width:100%;height:100%;background:radial-gradient(ellipse 55% 60% at 20% 75%,rgba(35,38,20,.4) 0%,rgba(35,38,20,0) 100%)"></i><b style="position:absolute;left:58%;top:19%;width:19%;height:58%;opacity:0.9"><i style="position:absolute;left:18%;top:30%;width:62%;height:66%;border-radius:40% 40% 20% 20%;background:linear-gradient(180deg,#858072 0%,#6f6a5d 50%,#4f4b42 100%)"></i><i style="position:absolute;left:6%;top:38%;width:18%;height:44%;border-radius:40%;background:#5a564c;transform:rotate(12deg)"></i><i style="position:absolute;left:58%;top:12%;width:30%;height:38%;border-radius:25%;background:#7a7466"></i><i style="position:absolute;left:22%;top:0%;width:50%;height:32%;border-radius:50%;background:radial-gradient(circle at 62% 30%,#d6cfbe 0%,#8f897b 35%,#4a473f 80%)"></i><i style="position:absolute;left:20%;top:9%;width:34%;height:20%;border-radius:50%;background:#24231f"></i><i style="position:absolute;left:48%;top:46%;width:46%;height:40%;border-radius:45% 50% 40% 45%;background:#2b6f79"></i><i style="position:absolute;left:70%;top:38%;width:26%;height:20%;border-radius:50%;background:#2e7480"></i></b></div></div></div><div class="hd" style="left:2510.8px;top:1155.2px"></div><div class="hd" style="left:2654.5px;top:1155.2px"></div><div class="rs" style="left:2649.7px;top:1290.8px"></div>
<div id="topbar"></div>
<div class="logo"></div>
<svg class="abs" style="left:77px;top:38px" width="64" height="64" viewBox="0 0 64 64"><circle cx="23.8" cy="25.1" r="5.2" fill="#fff"/><circle cx="19.5" cy="39.8" r="7" fill="#fff"/><path d="M32 47.7 L37.5 23 Q39 16.5 46 16.5 L48 16.5 L46.8 21.5 L45 21.5 Q42.5 21.5 42 24 L41.5 26.5 L46.5 26.5 L45.5 31 L40.5 31 L36.7 47.7 Z" fill="#fff"/></svg>
<svg class="abs" style="left:153px;top:62px" width="22" height="16" viewBox="0 0 22 16"><path d="M3 4 L11 11.5 L19 4" stroke="#fff" stroke-width="2.2" fill="none"/></svg>
<div class="tbtn" style="left:236px"></div>
<div class="tbtn" style="left:308px"></div>
<div class="tbtn" style="left:380px"></div>
<svg class="abs" style="left:236px;top:38px" width="64" height="64" viewBox="0 0 64 64"><path d="M28.5 21 L21 28.8 L28.5 36.5 M21 28.8 L34 28.8 Q41.5 28.8 41.5 35.5 Q41.5 42 34.5 42 L31 42" stroke="#fff" stroke-width="2.2" fill="none" stroke-linejoin="round"/></svg>
<svg class="abs" style="left:308px;top:38px" width="64" height="64" viewBox="0 0 64 64"><path d="M35.5 21 L43 28.8 L35.5 36.5 M43 28.8 L30 28.8 Q22.5 28.8 22.5 35.5 Q22.5 42 29.5 42 L33 42" stroke="#fff" stroke-width="2.2" fill="none" stroke-linejoin="round"/></svg>
<svg class="abs" style="left:380px;top:38px" width="64" height="64" viewBox="0 0 64 64"><path d="M22 21.5 L39 21.5 L42.5 25.5 L42.5 42 L22 42 Z" stroke="#fff" stroke-width="2.2" fill="none" stroke-linejoin="round"/><path d="M26 42 L26 34 L38 34 L38 42" stroke="#fff" stroke-width="2.2" fill="none"/><path d="M28 25.5 L36 25.5" stroke="#fff" stroke-width="2.2"/></svg>
<div class="crumb"></div>
<div class="abs" style="left:1273px;top:65px;width:16px;height:16px;border-radius:50%;background:#5cc26a"></div>
<div class="abs" id="tpl" style="left:1309px;top:53px;font-size:26px;letter-spacing:0.7px;line-height:32px;color:#9b9b9b;white-space:nowrap">Templates</div>
<div class="abs" style="left:1450px;top:53px;font-size:26px;line-height:32px;color:#8a8a8a">/</div>
<div class="abs" id="cam" style="left:1474px;top:53px;font-size:25px;line-height:32px;color:#fff;font-weight:bold;white-space:nowrap">CAMERA ANGLE</div>
<svg class="abs" style="left:1716px;top:60px" width="28" height="20" viewBox="0 0 28 20"><path d="M3 4.5 L14 15 L25 4.5" stroke="#fff" stroke-width="2.2" fill="none"/></svg>
<div class="dashc"></div>
<svg class="abs" style="left:2468px;top:58px" width="24" height="24" viewBox="0 0 24 24"><path d="M12 2 V22 M2 12 H22" stroke="#fff" stroke-width="2.2"/></svg>
<div class="credits"><div class="teal"></div></div>
<svg class="abs" style="left:2597px;top:56px" width="26" height="28" viewBox="0 0 26 28"><g stroke="#fff" stroke-width="2" fill="none"><ellipse cx="13" cy="6" rx="10" ry="4"/><path d="M3 6 V22 Q3 26 13 26 Q23 26 23 22 V6"/><path d="M3 11.5 Q3 15.5 13 15.5 Q23 15.5 23 11.5"/><path d="M3 17 Q3 21 13 21 Q23 21 23 17"/></g></svg>
<div class="abs" id="n707" style="left:2639px;top:54px;font-size:24px;line-height:30px;font-weight:bold;color:#fff">707</div>
<svg class="abs" style="left:2744px;top:58px" width="24" height="24" viewBox="0 0 24 24"><circle cx="12" cy="12" r="10.5" stroke="#fff" stroke-width="1.8" fill="none"/><path d="M12 7 V17 M7 12 H17" stroke="#fff" stroke-width="2"/></svg>
<svg class="abs" style="left:2836px;top:38px" width="64" height="64" viewBox="0 0 64 64"><circle cx="32" cy="32.4" r="25.9" fill="#dc3226" stroke="#74a83a" stroke-width="4.3"/><path d="M33 45 L54 31 Q59 40 55 50 Q47 57 37 56 Z" fill="#d14727"/><path d="M36.5 43.5 L52 33.5" stroke="#7a2a1a" stroke-width="0.8"/><path d="M40 35 L51 23 L55.5 32 L49 42 L34 44 Z" fill="#1c3236"/><path d="M22.5 21.5 L27 18.5 L31 15.5 L37 13.2 L42 13.8 L49 18 L51.5 24 L40 24 L30 24.5 L25 24 Z" fill="#223d41"/><path d="M28 24.5 L45 23.5 L43 32 L30 37 Z" fill="#0d1719"/><path d="M26.5 37.5 L31 35 L40 31 L46 27 L51 23.5 L50 31 L44 37 L36 40.5 L30 39.5 Z" fill="#223d41"/><circle cx="36" cy="17.5" r="1.3" fill="#f09a40"/><circle cx="31" cy="18.2" r="1" fill="#e08a38"/><path d="M12.8 30 L21.5 48.5" stroke="#8aa4b4" stroke-width="1.6"/><path d="M19 47 L27 53 L25 56.5 L18 51 Z" fill="#1b2b2e"/></svg>
<svg class="abs" style="left:2912px;top:62px" width="24" height="16" viewBox="0 0 24 16"><path d="M4 4 L12 11.5 L20 4" stroke="#fff" stroke-width="2.2" fill="none"/></svg>
<div id="zoombar"></div>
<svg class="abs" style="left:1264px;top:1402px" width="496" height="88" viewBox="0 0 496 88"><g stroke="#fff" stroke-width="2" fill="none" stroke-linecap="round" stroke-linejoin="round"><path d="M44 34.5 V53.5 M34.5 44 H53.5"/><path d="M111 44 H128"/><path d="M200 33.5 L206.5 40 M200 33.5 V39 M200 33.5 H205.5 M221 33.5 L214.5 40 M221 33.5 V39 M221 33.5 H215.5 M200 54.5 L206.5 48 M200 54.5 V49 M200 54.5 H205.5 M221 54.5 L214.5 48 M221 54.5 V49 M221 54.5 H215.5"/><path d="M275.5 36.5 Q275.5 34 278 34.5 Q281.5 36 285 34.5 Q287 33.8 289 34.5 Q292.5 36 296 34.5 Q298.5 34 298.5 36.5 V51.5 Q298.5 53.5 296 53 Q292.5 52 289 53.5 Q287 54.3 285 53.5 Q281.5 52 278 53.5 Q275.5 54 275.5 51.5 Z M283 37.5 V50 M291 37.5 V50"/><circle cx="376" cy="44" r="11"/><path d="M376 38.5 V49.5 M370.5 44 H381.5" stroke-width="2.2"/></g><g fill="#fff"><circle cx="443" cy="44" r="2"/><circle cx="452" cy="44" r="2"/><circle cx="461" cy="44" r="2"/></g><path d="M165 20.5 V67.5 M331 20.5 V67.5" stroke="#3a3a3a" stroke-width="1.5"/></svg>
<div id="rtab"></div>
<svg class="abs" style="left:2936px;top:686px" width="80" height="143" viewBox="0 0 80 143"><path d="M49 56 L33 72 L49 88" stroke="#fff" stroke-width="3" fill="none" stroke-linecap="round" stroke-linejoin="round"/></svg>
<div id="spark"><div class="in"></div></div>
<svg class="abs" style="left:2832px;top:1330px" width="160" height="160" viewBox="0 0 160 160"><g fill="#dfe3e6"><path d="M80 71.5 Q84.29 86.71 99.5 91 Q84.29 95.29 80 110.5 Q75.71 95.29 60.5 91 Q75.71 86.71 80 71.5 Z"/><path d="M64.8 53.2 Q67.33 62.17 76.3 64.7 Q67.33 67.23 64.8 76.2 Q62.269999999999996 67.23 53.3 64.7 Q62.269999999999996 62.17 64.8 53.2 Z"/><path d="M91.5 49.7 Q93.15 55.550000000000004 99.0 57.2 Q93.15 58.85 91.5 64.7 Q89.85 58.85 84.0 57.2 Q89.85 55.550000000000004 91.5 49.7 Z"/></g></svg>
</div>
<div class="abs" style="left:0;top:0;width:3023px;height:1520px;border-left:2px solid #434343;border-right:1.5px solid #434343;border-bottom:0.6px solid #333;border-bottom-left-radius:18px;border-bottom-right-radius:18px;pointer-events:none"></div>
</body></html>
